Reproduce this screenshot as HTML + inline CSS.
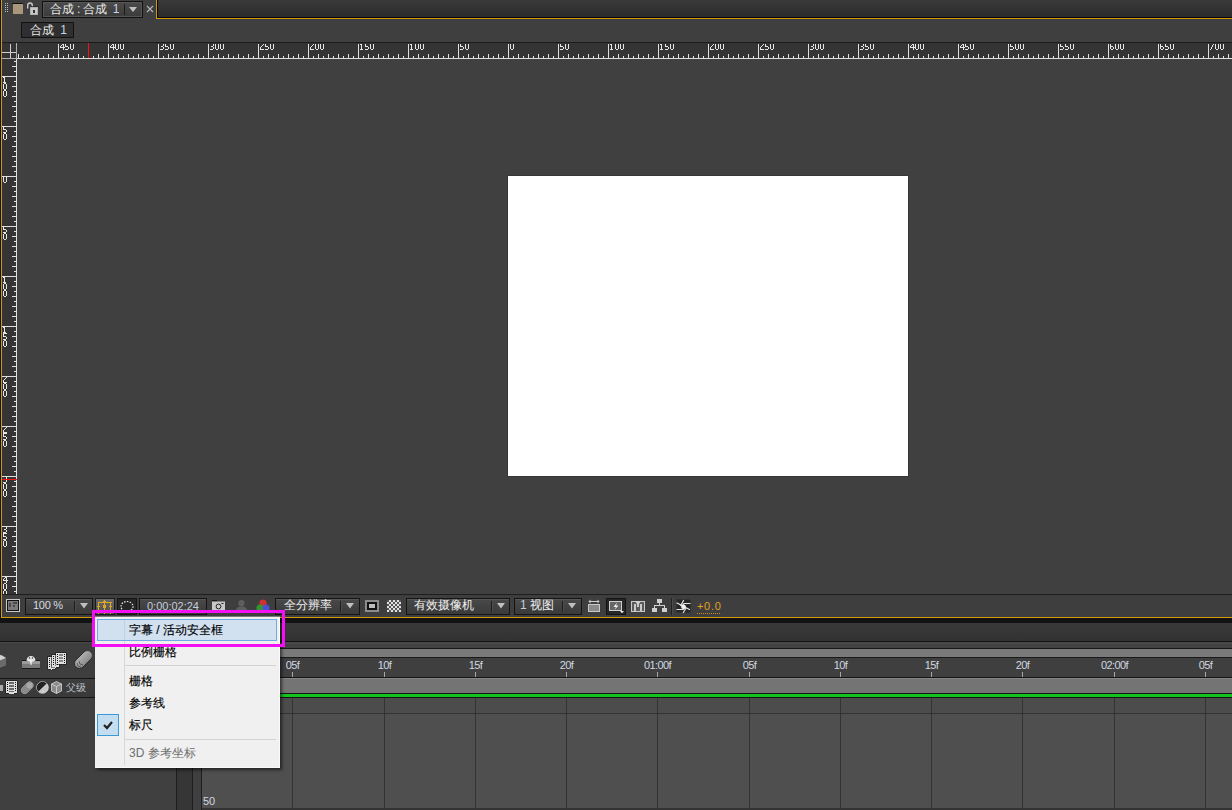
<!DOCTYPE html>
<html><head><meta charset="utf-8">
<style>
*{margin:0;padding:0;box-sizing:border-box}
html,body{width:1232px;height:810px;overflow:hidden;background:#3c3c3c;font-family:"Liberation Sans",sans-serif;position:relative}
.a{position:absolute}
.t{position:absolute;white-space:nowrap;color:#d8d8d8;font-size:12px;line-height:14px}
</style></head><body>
<div class="a" style="left:0px;top:0px;width:1232px;height:810px;background:#3f3f3f"></div>
<div class="a" style="left:0px;top:0px;width:1px;height:618px;background:#10101a"></div>
<div class="a" style="left:1px;top:0px;width:1px;height:618px;background:#d49a02"></div>
<div class="a" style="left:156px;top:0px;width:1076px;height:19px;background:#d49a02"></div>
<div class="a" style="left:157px;top:0px;width:1075px;height:18px;background:#080810"></div>
<div class="a" style="left:158px;top:0px;width:1074px;height:17px;background:linear-gradient(#3a3a3a,#2b2b2b)"></div>
<div class="a" style="left:5px;top:3px;width:1px;height:1px;background:#bdbdbd"></div>
<div class="a" style="left:7px;top:3px;width:1px;height:1px;background:#bdbdbd"></div>
<div class="a" style="left:5px;top:5px;width:1px;height:1px;background:#bdbdbd"></div>
<div class="a" style="left:7px;top:5px;width:1px;height:1px;background:#bdbdbd"></div>
<div class="a" style="left:5px;top:7px;width:1px;height:1px;background:#bdbdbd"></div>
<div class="a" style="left:7px;top:7px;width:1px;height:1px;background:#bdbdbd"></div>
<div class="a" style="left:5px;top:9px;width:1px;height:1px;background:#bdbdbd"></div>
<div class="a" style="left:7px;top:9px;width:1px;height:1px;background:#bdbdbd"></div>
<div class="a" style="left:5px;top:11px;width:1px;height:1px;background:#bdbdbd"></div>
<div class="a" style="left:7px;top:11px;width:1px;height:1px;background:#bdbdbd"></div>
<div class="a" style="left:12px;top:3px;width:11px;height:1px;background:#111"></div>
<div class="a" style="left:13px;top:4px;width:10px;height:10px;background:#a8977a"></div>
<svg class="a" style="left:26px;top:2px" width="14" height="14" viewBox="0 0 14 14"><path d="M1.7 6.5 V3.3 a2.3 2.3 0 0 1 4.6 0 V4.5" fill="none" stroke="#c8c8c8" stroke-width="1.4"/><rect x="3.5" y="4.5" width="9" height="1" fill="#1a1a1a"/><rect x="4" y="5" width="8" height="8" fill="#c8c8c8"/><rect x="4.5" y="5.5" width="7" height="7" fill="none" stroke="#b0b0b0"/><rect x="7" y="8" width="2" height="3" fill="#333"/></svg>
<div class="a" style="left:42px;top:1px;width:101px;height:17px;background:#111"></div>
<div class="a" style="left:43px;top:2px;width:99px;height:15px;background:linear-gradient(#4a4a4a,#3c3c3c);border:1px solid #555"></div>
<div class="a" style="left:124px;top:4px;width:1px;height:11px;background:#1a1a1a"></div>
<svg class="a" style="left:129px;top:6px" width="9" height="7"><path d="M0 1 H8 L4 6 Z" fill="#c0c0c0"/></svg>
<div class="t" style="left:50px;top:2px;color:#e8e8e8;font-size:12px;line-height:15px">合成<span style="margin:0 3px">:</span>合成 <span style="color:#c9d4e6;margin-left:2px">1</span></div>
<svg class="a" style="left:146px;top:5px" width="8" height="8"><path d="M1 1 L7 7 M7 1 L1 7" stroke="#b8b8b8" stroke-width="1.1"/></svg>
<div class="a" style="left:21px;top:22px;width:53px;height:16px;background:#121212"></div>
<div class="a" style="left:22px;top:23px;width:51px;height:14px;background:#2f2f2f"></div>
<div class="t" style="left:30px;top:23px;color:#e8e8e8;font-size:12px;line-height:15px">合成 <span style="color:#c9d4e6;margin-left:3px">1</span></div>
<div class="a" style="left:17px;top:59px;width:1215px;height:535px;background:#404040"></div>
<div class="a" style="left:507px;top:175px;width:402px;height:302px;background:#363636"></div>
<div class="a" style="left:508px;top:176px;width:400px;height:300px;background:#fff"></div>
<div class="a" style="left:2px;top:42px;width:1230px;height:1px;background:#1c1c1c"></div>
<div class="a" style="left:2px;top:43px;width:1230px;height:15px;background:#343434"></div>
<div class="a" style="left:2px;top:58px;width:1230px;height:1px;background:#e0e0e0"></div>
<svg class="a" style="left:0;top:43px" width="1232" height="16"><rect x="18" y="11" width="1" height="4" fill="#e0e0e0"/><rect x="23" y="13" width="1" height="2" fill="#e0e0e0"/><rect x="28" y="11" width="1" height="4" fill="#e0e0e0"/><rect x="33" y="13" width="1" height="2" fill="#e0e0e0"/><rect x="38" y="11" width="1" height="4" fill="#e0e0e0"/><rect x="43" y="13" width="1" height="2" fill="#e0e0e0"/><rect x="48" y="11" width="1" height="4" fill="#e0e0e0"/><rect x="53" y="13" width="1" height="2" fill="#e0e0e0"/><rect x="58" y="1" width="1" height="15" fill="#e0e0e0"/><rect x="63" y="13" width="1" height="2" fill="#e0e0e0"/><rect x="68" y="11" width="1" height="4" fill="#e0e0e0"/><rect x="73" y="13" width="1" height="2" fill="#e0e0e0"/><rect x="78" y="11" width="1" height="4" fill="#e0e0e0"/><rect x="83" y="13" width="1" height="2" fill="#e0e0e0"/><rect x="88" y="11" width="1" height="4" fill="#e0e0e0"/><rect x="93" y="13" width="1" height="2" fill="#e0e0e0"/><rect x="98" y="11" width="1" height="4" fill="#e0e0e0"/><rect x="103" y="13" width="1" height="2" fill="#e0e0e0"/><rect x="108" y="1" width="1" height="15" fill="#e0e0e0"/><rect x="113" y="13" width="1" height="2" fill="#e0e0e0"/><rect x="118" y="11" width="1" height="4" fill="#e0e0e0"/><rect x="123" y="13" width="1" height="2" fill="#e0e0e0"/><rect x="128" y="11" width="1" height="4" fill="#e0e0e0"/><rect x="133" y="13" width="1" height="2" fill="#e0e0e0"/><rect x="138" y="11" width="1" height="4" fill="#e0e0e0"/><rect x="143" y="13" width="1" height="2" fill="#e0e0e0"/><rect x="148" y="11" width="1" height="4" fill="#e0e0e0"/><rect x="153" y="13" width="1" height="2" fill="#e0e0e0"/><rect x="158" y="1" width="1" height="15" fill="#e0e0e0"/><rect x="163" y="13" width="1" height="2" fill="#e0e0e0"/><rect x="168" y="11" width="1" height="4" fill="#e0e0e0"/><rect x="173" y="13" width="1" height="2" fill="#e0e0e0"/><rect x="178" y="11" width="1" height="4" fill="#e0e0e0"/><rect x="183" y="13" width="1" height="2" fill="#e0e0e0"/><rect x="188" y="11" width="1" height="4" fill="#e0e0e0"/><rect x="193" y="13" width="1" height="2" fill="#e0e0e0"/><rect x="198" y="11" width="1" height="4" fill="#e0e0e0"/><rect x="203" y="13" width="1" height="2" fill="#e0e0e0"/><rect x="208" y="1" width="1" height="15" fill="#e0e0e0"/><rect x="213" y="13" width="1" height="2" fill="#e0e0e0"/><rect x="218" y="11" width="1" height="4" fill="#e0e0e0"/><rect x="223" y="13" width="1" height="2" fill="#e0e0e0"/><rect x="228" y="11" width="1" height="4" fill="#e0e0e0"/><rect x="233" y="13" width="1" height="2" fill="#e0e0e0"/><rect x="238" y="11" width="1" height="4" fill="#e0e0e0"/><rect x="243" y="13" width="1" height="2" fill="#e0e0e0"/><rect x="248" y="11" width="1" height="4" fill="#e0e0e0"/><rect x="253" y="13" width="1" height="2" fill="#e0e0e0"/><rect x="258" y="1" width="1" height="15" fill="#e0e0e0"/><rect x="263" y="13" width="1" height="2" fill="#e0e0e0"/><rect x="268" y="11" width="1" height="4" fill="#e0e0e0"/><rect x="273" y="13" width="1" height="2" fill="#e0e0e0"/><rect x="278" y="11" width="1" height="4" fill="#e0e0e0"/><rect x="283" y="13" width="1" height="2" fill="#e0e0e0"/><rect x="288" y="11" width="1" height="4" fill="#e0e0e0"/><rect x="293" y="13" width="1" height="2" fill="#e0e0e0"/><rect x="298" y="11" width="1" height="4" fill="#e0e0e0"/><rect x="303" y="13" width="1" height="2" fill="#e0e0e0"/><rect x="308" y="1" width="1" height="15" fill="#e0e0e0"/><rect x="313" y="13" width="1" height="2" fill="#e0e0e0"/><rect x="318" y="11" width="1" height="4" fill="#e0e0e0"/><rect x="323" y="13" width="1" height="2" fill="#e0e0e0"/><rect x="328" y="11" width="1" height="4" fill="#e0e0e0"/><rect x="333" y="13" width="1" height="2" fill="#e0e0e0"/><rect x="338" y="11" width="1" height="4" fill="#e0e0e0"/><rect x="343" y="13" width="1" height="2" fill="#e0e0e0"/><rect x="348" y="11" width="1" height="4" fill="#e0e0e0"/><rect x="353" y="13" width="1" height="2" fill="#e0e0e0"/><rect x="358" y="1" width="1" height="15" fill="#e0e0e0"/><rect x="363" y="13" width="1" height="2" fill="#e0e0e0"/><rect x="368" y="11" width="1" height="4" fill="#e0e0e0"/><rect x="373" y="13" width="1" height="2" fill="#e0e0e0"/><rect x="378" y="11" width="1" height="4" fill="#e0e0e0"/><rect x="383" y="13" width="1" height="2" fill="#e0e0e0"/><rect x="388" y="11" width="1" height="4" fill="#e0e0e0"/><rect x="393" y="13" width="1" height="2" fill="#e0e0e0"/><rect x="398" y="11" width="1" height="4" fill="#e0e0e0"/><rect x="403" y="13" width="1" height="2" fill="#e0e0e0"/><rect x="408" y="1" width="1" height="15" fill="#e0e0e0"/><rect x="413" y="13" width="1" height="2" fill="#e0e0e0"/><rect x="418" y="11" width="1" height="4" fill="#e0e0e0"/><rect x="423" y="13" width="1" height="2" fill="#e0e0e0"/><rect x="428" y="11" width="1" height="4" fill="#e0e0e0"/><rect x="433" y="13" width="1" height="2" fill="#e0e0e0"/><rect x="438" y="11" width="1" height="4" fill="#e0e0e0"/><rect x="443" y="13" width="1" height="2" fill="#e0e0e0"/><rect x="448" y="11" width="1" height="4" fill="#e0e0e0"/><rect x="453" y="13" width="1" height="2" fill="#e0e0e0"/><rect x="458" y="1" width="1" height="15" fill="#e0e0e0"/><rect x="463" y="13" width="1" height="2" fill="#e0e0e0"/><rect x="468" y="11" width="1" height="4" fill="#e0e0e0"/><rect x="473" y="13" width="1" height="2" fill="#e0e0e0"/><rect x="478" y="11" width="1" height="4" fill="#e0e0e0"/><rect x="483" y="13" width="1" height="2" fill="#e0e0e0"/><rect x="488" y="11" width="1" height="4" fill="#e0e0e0"/><rect x="493" y="13" width="1" height="2" fill="#e0e0e0"/><rect x="498" y="11" width="1" height="4" fill="#e0e0e0"/><rect x="503" y="13" width="1" height="2" fill="#e0e0e0"/><rect x="508" y="1" width="1" height="15" fill="#e0e0e0"/><rect x="513" y="13" width="1" height="2" fill="#e0e0e0"/><rect x="518" y="11" width="1" height="4" fill="#e0e0e0"/><rect x="523" y="13" width="1" height="2" fill="#e0e0e0"/><rect x="528" y="11" width="1" height="4" fill="#e0e0e0"/><rect x="533" y="13" width="1" height="2" fill="#e0e0e0"/><rect x="538" y="11" width="1" height="4" fill="#e0e0e0"/><rect x="543" y="13" width="1" height="2" fill="#e0e0e0"/><rect x="548" y="11" width="1" height="4" fill="#e0e0e0"/><rect x="553" y="13" width="1" height="2" fill="#e0e0e0"/><rect x="558" y="1" width="1" height="15" fill="#e0e0e0"/><rect x="563" y="13" width="1" height="2" fill="#e0e0e0"/><rect x="568" y="11" width="1" height="4" fill="#e0e0e0"/><rect x="573" y="13" width="1" height="2" fill="#e0e0e0"/><rect x="578" y="11" width="1" height="4" fill="#e0e0e0"/><rect x="583" y="13" width="1" height="2" fill="#e0e0e0"/><rect x="588" y="11" width="1" height="4" fill="#e0e0e0"/><rect x="593" y="13" width="1" height="2" fill="#e0e0e0"/><rect x="598" y="11" width="1" height="4" fill="#e0e0e0"/><rect x="603" y="13" width="1" height="2" fill="#e0e0e0"/><rect x="608" y="1" width="1" height="15" fill="#e0e0e0"/><rect x="613" y="13" width="1" height="2" fill="#e0e0e0"/><rect x="618" y="11" width="1" height="4" fill="#e0e0e0"/><rect x="623" y="13" width="1" height="2" fill="#e0e0e0"/><rect x="628" y="11" width="1" height="4" fill="#e0e0e0"/><rect x="633" y="13" width="1" height="2" fill="#e0e0e0"/><rect x="638" y="11" width="1" height="4" fill="#e0e0e0"/><rect x="643" y="13" width="1" height="2" fill="#e0e0e0"/><rect x="648" y="11" width="1" height="4" fill="#e0e0e0"/><rect x="653" y="13" width="1" height="2" fill="#e0e0e0"/><rect x="658" y="1" width="1" height="15" fill="#e0e0e0"/><rect x="663" y="13" width="1" height="2" fill="#e0e0e0"/><rect x="668" y="11" width="1" height="4" fill="#e0e0e0"/><rect x="673" y="13" width="1" height="2" fill="#e0e0e0"/><rect x="678" y="11" width="1" height="4" fill="#e0e0e0"/><rect x="683" y="13" width="1" height="2" fill="#e0e0e0"/><rect x="688" y="11" width="1" height="4" fill="#e0e0e0"/><rect x="693" y="13" width="1" height="2" fill="#e0e0e0"/><rect x="698" y="11" width="1" height="4" fill="#e0e0e0"/><rect x="703" y="13" width="1" height="2" fill="#e0e0e0"/><rect x="708" y="1" width="1" height="15" fill="#e0e0e0"/><rect x="713" y="13" width="1" height="2" fill="#e0e0e0"/><rect x="718" y="11" width="1" height="4" fill="#e0e0e0"/><rect x="723" y="13" width="1" height="2" fill="#e0e0e0"/><rect x="728" y="11" width="1" height="4" fill="#e0e0e0"/><rect x="733" y="13" width="1" height="2" fill="#e0e0e0"/><rect x="738" y="11" width="1" height="4" fill="#e0e0e0"/><rect x="743" y="13" width="1" height="2" fill="#e0e0e0"/><rect x="748" y="11" width="1" height="4" fill="#e0e0e0"/><rect x="753" y="13" width="1" height="2" fill="#e0e0e0"/><rect x="758" y="1" width="1" height="15" fill="#e0e0e0"/><rect x="763" y="13" width="1" height="2" fill="#e0e0e0"/><rect x="768" y="11" width="1" height="4" fill="#e0e0e0"/><rect x="773" y="13" width="1" height="2" fill="#e0e0e0"/><rect x="778" y="11" width="1" height="4" fill="#e0e0e0"/><rect x="783" y="13" width="1" height="2" fill="#e0e0e0"/><rect x="788" y="11" width="1" height="4" fill="#e0e0e0"/><rect x="793" y="13" width="1" height="2" fill="#e0e0e0"/><rect x="798" y="11" width="1" height="4" fill="#e0e0e0"/><rect x="803" y="13" width="1" height="2" fill="#e0e0e0"/><rect x="808" y="1" width="1" height="15" fill="#e0e0e0"/><rect x="813" y="13" width="1" height="2" fill="#e0e0e0"/><rect x="818" y="11" width="1" height="4" fill="#e0e0e0"/><rect x="823" y="13" width="1" height="2" fill="#e0e0e0"/><rect x="828" y="11" width="1" height="4" fill="#e0e0e0"/><rect x="833" y="13" width="1" height="2" fill="#e0e0e0"/><rect x="838" y="11" width="1" height="4" fill="#e0e0e0"/><rect x="843" y="13" width="1" height="2" fill="#e0e0e0"/><rect x="848" y="11" width="1" height="4" fill="#e0e0e0"/><rect x="853" y="13" width="1" height="2" fill="#e0e0e0"/><rect x="858" y="1" width="1" height="15" fill="#e0e0e0"/><rect x="863" y="13" width="1" height="2" fill="#e0e0e0"/><rect x="868" y="11" width="1" height="4" fill="#e0e0e0"/><rect x="873" y="13" width="1" height="2" fill="#e0e0e0"/><rect x="878" y="11" width="1" height="4" fill="#e0e0e0"/><rect x="883" y="13" width="1" height="2" fill="#e0e0e0"/><rect x="888" y="11" width="1" height="4" fill="#e0e0e0"/><rect x="893" y="13" width="1" height="2" fill="#e0e0e0"/><rect x="898" y="11" width="1" height="4" fill="#e0e0e0"/><rect x="903" y="13" width="1" height="2" fill="#e0e0e0"/><rect x="908" y="1" width="1" height="15" fill="#e0e0e0"/><rect x="913" y="13" width="1" height="2" fill="#e0e0e0"/><rect x="918" y="11" width="1" height="4" fill="#e0e0e0"/><rect x="923" y="13" width="1" height="2" fill="#e0e0e0"/><rect x="928" y="11" width="1" height="4" fill="#e0e0e0"/><rect x="933" y="13" width="1" height="2" fill="#e0e0e0"/><rect x="938" y="11" width="1" height="4" fill="#e0e0e0"/><rect x="943" y="13" width="1" height="2" fill="#e0e0e0"/><rect x="948" y="11" width="1" height="4" fill="#e0e0e0"/><rect x="953" y="13" width="1" height="2" fill="#e0e0e0"/><rect x="958" y="1" width="1" height="15" fill="#e0e0e0"/><rect x="963" y="13" width="1" height="2" fill="#e0e0e0"/><rect x="968" y="11" width="1" height="4" fill="#e0e0e0"/><rect x="973" y="13" width="1" height="2" fill="#e0e0e0"/><rect x="978" y="11" width="1" height="4" fill="#e0e0e0"/><rect x="983" y="13" width="1" height="2" fill="#e0e0e0"/><rect x="988" y="11" width="1" height="4" fill="#e0e0e0"/><rect x="993" y="13" width="1" height="2" fill="#e0e0e0"/><rect x="998" y="11" width="1" height="4" fill="#e0e0e0"/><rect x="1003" y="13" width="1" height="2" fill="#e0e0e0"/><rect x="1008" y="1" width="1" height="15" fill="#e0e0e0"/><rect x="1013" y="13" width="1" height="2" fill="#e0e0e0"/><rect x="1018" y="11" width="1" height="4" fill="#e0e0e0"/><rect x="1023" y="13" width="1" height="2" fill="#e0e0e0"/><rect x="1028" y="11" width="1" height="4" fill="#e0e0e0"/><rect x="1033" y="13" width="1" height="2" fill="#e0e0e0"/><rect x="1038" y="11" width="1" height="4" fill="#e0e0e0"/><rect x="1043" y="13" width="1" height="2" fill="#e0e0e0"/><rect x="1048" y="11" width="1" height="4" fill="#e0e0e0"/><rect x="1053" y="13" width="1" height="2" fill="#e0e0e0"/><rect x="1058" y="1" width="1" height="15" fill="#e0e0e0"/><rect x="1063" y="13" width="1" height="2" fill="#e0e0e0"/><rect x="1068" y="11" width="1" height="4" fill="#e0e0e0"/><rect x="1073" y="13" width="1" height="2" fill="#e0e0e0"/><rect x="1078" y="11" width="1" height="4" fill="#e0e0e0"/><rect x="1083" y="13" width="1" height="2" fill="#e0e0e0"/><rect x="1088" y="11" width="1" height="4" fill="#e0e0e0"/><rect x="1093" y="13" width="1" height="2" fill="#e0e0e0"/><rect x="1098" y="11" width="1" height="4" fill="#e0e0e0"/><rect x="1103" y="13" width="1" height="2" fill="#e0e0e0"/><rect x="1108" y="1" width="1" height="15" fill="#e0e0e0"/><rect x="1113" y="13" width="1" height="2" fill="#e0e0e0"/><rect x="1118" y="11" width="1" height="4" fill="#e0e0e0"/><rect x="1123" y="13" width="1" height="2" fill="#e0e0e0"/><rect x="1128" y="11" width="1" height="4" fill="#e0e0e0"/><rect x="1133" y="13" width="1" height="2" fill="#e0e0e0"/><rect x="1138" y="11" width="1" height="4" fill="#e0e0e0"/><rect x="1143" y="13" width="1" height="2" fill="#e0e0e0"/><rect x="1148" y="11" width="1" height="4" fill="#e0e0e0"/><rect x="1153" y="13" width="1" height="2" fill="#e0e0e0"/><rect x="1158" y="1" width="1" height="15" fill="#e0e0e0"/><rect x="1163" y="13" width="1" height="2" fill="#e0e0e0"/><rect x="1168" y="11" width="1" height="4" fill="#e0e0e0"/><rect x="1173" y="13" width="1" height="2" fill="#e0e0e0"/><rect x="1178" y="11" width="1" height="4" fill="#e0e0e0"/><rect x="1183" y="13" width="1" height="2" fill="#e0e0e0"/><rect x="1188" y="11" width="1" height="4" fill="#e0e0e0"/><rect x="1193" y="13" width="1" height="2" fill="#e0e0e0"/><rect x="1198" y="11" width="1" height="4" fill="#e0e0e0"/><rect x="1203" y="13" width="1" height="2" fill="#e0e0e0"/><rect x="1208" y="1" width="1" height="15" fill="#e0e0e0"/><rect x="1213" y="13" width="1" height="2" fill="#e0e0e0"/><rect x="1218" y="11" width="1" height="4" fill="#e0e0e0"/><rect x="1223" y="13" width="1" height="2" fill="#e0e0e0"/><rect x="1228" y="11" width="1" height="4" fill="#e0e0e0"/></svg>
<svg class="a" style="left:0;top:0" width="1232" height="60"><g fill="#e6e6e6"><rect x="62" y="44" width="1" height="1"/><rect x="63" y="44" width="1" height="1"/><rect x="61" y="45" width="1" height="1"/><rect x="63" y="45" width="1" height="1"/><rect x="60" y="46" width="1" height="1"/><rect x="63" y="46" width="1" height="1"/><rect x="60" y="47" width="1" height="1"/><rect x="61" y="47" width="1" height="1"/><rect x="62" y="47" width="1" height="1"/><rect x="63" y="47" width="1" height="1"/><rect x="64" y="47" width="1" height="1"/><rect x="63" y="48" width="1" height="1"/><rect x="63" y="49" width="1" height="1"/><rect x="65" y="44" width="1" height="1"/><rect x="65" y="45" width="1" height="1"/><rect x="65" y="46" width="1" height="1"/><rect x="66" y="46" width="1" height="1"/><rect x="67" y="46" width="1" height="1"/><rect x="68" y="47" width="1" height="1"/><rect x="68" y="48" width="1" height="1"/><rect x="65" y="49" width="1" height="1"/><rect x="66" y="49" width="1" height="1"/><rect x="67" y="49" width="1" height="1"/><rect x="70" y="44" width="1" height="1"/><rect x="73" y="44" width="1" height="1"/><rect x="70" y="45" width="1" height="1"/><rect x="73" y="45" width="1" height="1"/><rect x="70" y="46" width="1" height="1"/><rect x="73" y="46" width="1" height="1"/><rect x="70" y="47" width="1" height="1"/><rect x="73" y="47" width="1" height="1"/><rect x="70" y="48" width="1" height="1"/><rect x="73" y="48" width="1" height="1"/><rect x="71" y="49" width="1" height="1"/><rect x="72" y="49" width="1" height="1"/><rect x="112" y="44" width="1" height="1"/><rect x="113" y="44" width="1" height="1"/><rect x="111" y="45" width="1" height="1"/><rect x="113" y="45" width="1" height="1"/><rect x="110" y="46" width="1" height="1"/><rect x="113" y="46" width="1" height="1"/><rect x="110" y="47" width="1" height="1"/><rect x="111" y="47" width="1" height="1"/><rect x="112" y="47" width="1" height="1"/><rect x="113" y="47" width="1" height="1"/><rect x="114" y="47" width="1" height="1"/><rect x="113" y="48" width="1" height="1"/><rect x="113" y="49" width="1" height="1"/><rect x="115" y="44" width="1" height="1"/><rect x="118" y="44" width="1" height="1"/><rect x="115" y="45" width="1" height="1"/><rect x="118" y="45" width="1" height="1"/><rect x="115" y="46" width="1" height="1"/><rect x="118" y="46" width="1" height="1"/><rect x="115" y="47" width="1" height="1"/><rect x="118" y="47" width="1" height="1"/><rect x="115" y="48" width="1" height="1"/><rect x="118" y="48" width="1" height="1"/><rect x="116" y="49" width="1" height="1"/><rect x="117" y="49" width="1" height="1"/><rect x="120" y="44" width="1" height="1"/><rect x="123" y="44" width="1" height="1"/><rect x="120" y="45" width="1" height="1"/><rect x="123" y="45" width="1" height="1"/><rect x="120" y="46" width="1" height="1"/><rect x="123" y="46" width="1" height="1"/><rect x="120" y="47" width="1" height="1"/><rect x="123" y="47" width="1" height="1"/><rect x="120" y="48" width="1" height="1"/><rect x="123" y="48" width="1" height="1"/><rect x="121" y="49" width="1" height="1"/><rect x="122" y="49" width="1" height="1"/><rect x="163" y="44" width="1" height="1"/><rect x="163" y="45" width="1" height="1"/><rect x="161" y="46" width="1" height="1"/><rect x="162" y="46" width="1" height="1"/><rect x="163" y="47" width="1" height="1"/><rect x="163" y="48" width="1" height="1"/><rect x="160" y="49" width="1" height="1"/><rect x="161" y="49" width="1" height="1"/><rect x="162" y="49" width="1" height="1"/><rect x="165" y="44" width="1" height="1"/><rect x="165" y="45" width="1" height="1"/><rect x="165" y="46" width="1" height="1"/><rect x="166" y="46" width="1" height="1"/><rect x="167" y="46" width="1" height="1"/><rect x="168" y="47" width="1" height="1"/><rect x="168" y="48" width="1" height="1"/><rect x="165" y="49" width="1" height="1"/><rect x="166" y="49" width="1" height="1"/><rect x="167" y="49" width="1" height="1"/><rect x="170" y="44" width="1" height="1"/><rect x="173" y="44" width="1" height="1"/><rect x="170" y="45" width="1" height="1"/><rect x="173" y="45" width="1" height="1"/><rect x="170" y="46" width="1" height="1"/><rect x="173" y="46" width="1" height="1"/><rect x="170" y="47" width="1" height="1"/><rect x="173" y="47" width="1" height="1"/><rect x="170" y="48" width="1" height="1"/><rect x="173" y="48" width="1" height="1"/><rect x="171" y="49" width="1" height="1"/><rect x="172" y="49" width="1" height="1"/><rect x="213" y="44" width="1" height="1"/><rect x="213" y="45" width="1" height="1"/><rect x="211" y="46" width="1" height="1"/><rect x="212" y="46" width="1" height="1"/><rect x="213" y="47" width="1" height="1"/><rect x="213" y="48" width="1" height="1"/><rect x="210" y="49" width="1" height="1"/><rect x="211" y="49" width="1" height="1"/><rect x="212" y="49" width="1" height="1"/><rect x="215" y="44" width="1" height="1"/><rect x="218" y="44" width="1" height="1"/><rect x="215" y="45" width="1" height="1"/><rect x="218" y="45" width="1" height="1"/><rect x="215" y="46" width="1" height="1"/><rect x="218" y="46" width="1" height="1"/><rect x="215" y="47" width="1" height="1"/><rect x="218" y="47" width="1" height="1"/><rect x="215" y="48" width="1" height="1"/><rect x="218" y="48" width="1" height="1"/><rect x="216" y="49" width="1" height="1"/><rect x="217" y="49" width="1" height="1"/><rect x="220" y="44" width="1" height="1"/><rect x="223" y="44" width="1" height="1"/><rect x="220" y="45" width="1" height="1"/><rect x="223" y="45" width="1" height="1"/><rect x="220" y="46" width="1" height="1"/><rect x="223" y="46" width="1" height="1"/><rect x="220" y="47" width="1" height="1"/><rect x="223" y="47" width="1" height="1"/><rect x="220" y="48" width="1" height="1"/><rect x="223" y="48" width="1" height="1"/><rect x="221" y="49" width="1" height="1"/><rect x="222" y="49" width="1" height="1"/><rect x="263" y="44" width="1" height="1"/><rect x="262" y="45" width="1" height="1"/><rect x="261" y="46" width="1" height="1"/><rect x="260" y="47" width="1" height="1"/><rect x="260" y="48" width="1" height="1"/><rect x="260" y="49" width="1" height="1"/><rect x="261" y="49" width="1" height="1"/><rect x="262" y="49" width="1" height="1"/><rect x="263" y="49" width="1" height="1"/><rect x="265" y="44" width="1" height="1"/><rect x="265" y="45" width="1" height="1"/><rect x="265" y="46" width="1" height="1"/><rect x="266" y="46" width="1" height="1"/><rect x="267" y="46" width="1" height="1"/><rect x="268" y="47" width="1" height="1"/><rect x="268" y="48" width="1" height="1"/><rect x="265" y="49" width="1" height="1"/><rect x="266" y="49" width="1" height="1"/><rect x="267" y="49" width="1" height="1"/><rect x="270" y="44" width="1" height="1"/><rect x="273" y="44" width="1" height="1"/><rect x="270" y="45" width="1" height="1"/><rect x="273" y="45" width="1" height="1"/><rect x="270" y="46" width="1" height="1"/><rect x="273" y="46" width="1" height="1"/><rect x="270" y="47" width="1" height="1"/><rect x="273" y="47" width="1" height="1"/><rect x="270" y="48" width="1" height="1"/><rect x="273" y="48" width="1" height="1"/><rect x="271" y="49" width="1" height="1"/><rect x="272" y="49" width="1" height="1"/><rect x="313" y="44" width="1" height="1"/><rect x="312" y="45" width="1" height="1"/><rect x="311" y="46" width="1" height="1"/><rect x="310" y="47" width="1" height="1"/><rect x="310" y="48" width="1" height="1"/><rect x="310" y="49" width="1" height="1"/><rect x="311" y="49" width="1" height="1"/><rect x="312" y="49" width="1" height="1"/><rect x="313" y="49" width="1" height="1"/><rect x="315" y="44" width="1" height="1"/><rect x="318" y="44" width="1" height="1"/><rect x="315" y="45" width="1" height="1"/><rect x="318" y="45" width="1" height="1"/><rect x="315" y="46" width="1" height="1"/><rect x="318" y="46" width="1" height="1"/><rect x="315" y="47" width="1" height="1"/><rect x="318" y="47" width="1" height="1"/><rect x="315" y="48" width="1" height="1"/><rect x="318" y="48" width="1" height="1"/><rect x="316" y="49" width="1" height="1"/><rect x="317" y="49" width="1" height="1"/><rect x="320" y="44" width="1" height="1"/><rect x="323" y="44" width="1" height="1"/><rect x="320" y="45" width="1" height="1"/><rect x="323" y="45" width="1" height="1"/><rect x="320" y="46" width="1" height="1"/><rect x="323" y="46" width="1" height="1"/><rect x="320" y="47" width="1" height="1"/><rect x="323" y="47" width="1" height="1"/><rect x="320" y="48" width="1" height="1"/><rect x="323" y="48" width="1" height="1"/><rect x="321" y="49" width="1" height="1"/><rect x="322" y="49" width="1" height="1"/><rect x="360" y="44" width="1" height="1"/><rect x="361" y="44" width="1" height="1"/><rect x="361" y="45" width="1" height="1"/><rect x="361" y="46" width="1" height="1"/><rect x="361" y="47" width="1" height="1"/><rect x="361" y="48" width="1" height="1"/><rect x="360" y="49" width="1" height="1"/><rect x="361" y="49" width="1" height="1"/><rect x="362" y="49" width="1" height="1"/><rect x="365" y="44" width="1" height="1"/><rect x="365" y="45" width="1" height="1"/><rect x="365" y="46" width="1" height="1"/><rect x="366" y="46" width="1" height="1"/><rect x="367" y="46" width="1" height="1"/><rect x="368" y="47" width="1" height="1"/><rect x="368" y="48" width="1" height="1"/><rect x="365" y="49" width="1" height="1"/><rect x="366" y="49" width="1" height="1"/><rect x="367" y="49" width="1" height="1"/><rect x="370" y="44" width="1" height="1"/><rect x="373" y="44" width="1" height="1"/><rect x="370" y="45" width="1" height="1"/><rect x="373" y="45" width="1" height="1"/><rect x="370" y="46" width="1" height="1"/><rect x="373" y="46" width="1" height="1"/><rect x="370" y="47" width="1" height="1"/><rect x="373" y="47" width="1" height="1"/><rect x="370" y="48" width="1" height="1"/><rect x="373" y="48" width="1" height="1"/><rect x="371" y="49" width="1" height="1"/><rect x="372" y="49" width="1" height="1"/><rect x="410" y="44" width="1" height="1"/><rect x="411" y="44" width="1" height="1"/><rect x="411" y="45" width="1" height="1"/><rect x="411" y="46" width="1" height="1"/><rect x="411" y="47" width="1" height="1"/><rect x="411" y="48" width="1" height="1"/><rect x="410" y="49" width="1" height="1"/><rect x="411" y="49" width="1" height="1"/><rect x="412" y="49" width="1" height="1"/><rect x="415" y="44" width="1" height="1"/><rect x="418" y="44" width="1" height="1"/><rect x="415" y="45" width="1" height="1"/><rect x="418" y="45" width="1" height="1"/><rect x="415" y="46" width="1" height="1"/><rect x="418" y="46" width="1" height="1"/><rect x="415" y="47" width="1" height="1"/><rect x="418" y="47" width="1" height="1"/><rect x="415" y="48" width="1" height="1"/><rect x="418" y="48" width="1" height="1"/><rect x="416" y="49" width="1" height="1"/><rect x="417" y="49" width="1" height="1"/><rect x="420" y="44" width="1" height="1"/><rect x="423" y="44" width="1" height="1"/><rect x="420" y="45" width="1" height="1"/><rect x="423" y="45" width="1" height="1"/><rect x="420" y="46" width="1" height="1"/><rect x="423" y="46" width="1" height="1"/><rect x="420" y="47" width="1" height="1"/><rect x="423" y="47" width="1" height="1"/><rect x="420" y="48" width="1" height="1"/><rect x="423" y="48" width="1" height="1"/><rect x="421" y="49" width="1" height="1"/><rect x="422" y="49" width="1" height="1"/><rect x="460" y="44" width="1" height="1"/><rect x="460" y="45" width="1" height="1"/><rect x="460" y="46" width="1" height="1"/><rect x="461" y="46" width="1" height="1"/><rect x="462" y="46" width="1" height="1"/><rect x="463" y="47" width="1" height="1"/><rect x="463" y="48" width="1" height="1"/><rect x="460" y="49" width="1" height="1"/><rect x="461" y="49" width="1" height="1"/><rect x="462" y="49" width="1" height="1"/><rect x="465" y="44" width="1" height="1"/><rect x="468" y="44" width="1" height="1"/><rect x="465" y="45" width="1" height="1"/><rect x="468" y="45" width="1" height="1"/><rect x="465" y="46" width="1" height="1"/><rect x="468" y="46" width="1" height="1"/><rect x="465" y="47" width="1" height="1"/><rect x="468" y="47" width="1" height="1"/><rect x="465" y="48" width="1" height="1"/><rect x="468" y="48" width="1" height="1"/><rect x="466" y="49" width="1" height="1"/><rect x="467" y="49" width="1" height="1"/><rect x="510" y="44" width="1" height="1"/><rect x="513" y="44" width="1" height="1"/><rect x="510" y="45" width="1" height="1"/><rect x="513" y="45" width="1" height="1"/><rect x="510" y="46" width="1" height="1"/><rect x="513" y="46" width="1" height="1"/><rect x="510" y="47" width="1" height="1"/><rect x="513" y="47" width="1" height="1"/><rect x="510" y="48" width="1" height="1"/><rect x="513" y="48" width="1" height="1"/><rect x="511" y="49" width="1" height="1"/><rect x="512" y="49" width="1" height="1"/><rect x="560" y="44" width="1" height="1"/><rect x="560" y="45" width="1" height="1"/><rect x="560" y="46" width="1" height="1"/><rect x="561" y="46" width="1" height="1"/><rect x="562" y="46" width="1" height="1"/><rect x="563" y="47" width="1" height="1"/><rect x="563" y="48" width="1" height="1"/><rect x="560" y="49" width="1" height="1"/><rect x="561" y="49" width="1" height="1"/><rect x="562" y="49" width="1" height="1"/><rect x="565" y="44" width="1" height="1"/><rect x="568" y="44" width="1" height="1"/><rect x="565" y="45" width="1" height="1"/><rect x="568" y="45" width="1" height="1"/><rect x="565" y="46" width="1" height="1"/><rect x="568" y="46" width="1" height="1"/><rect x="565" y="47" width="1" height="1"/><rect x="568" y="47" width="1" height="1"/><rect x="565" y="48" width="1" height="1"/><rect x="568" y="48" width="1" height="1"/><rect x="566" y="49" width="1" height="1"/><rect x="567" y="49" width="1" height="1"/><rect x="610" y="44" width="1" height="1"/><rect x="611" y="44" width="1" height="1"/><rect x="611" y="45" width="1" height="1"/><rect x="611" y="46" width="1" height="1"/><rect x="611" y="47" width="1" height="1"/><rect x="611" y="48" width="1" height="1"/><rect x="610" y="49" width="1" height="1"/><rect x="611" y="49" width="1" height="1"/><rect x="612" y="49" width="1" height="1"/><rect x="615" y="44" width="1" height="1"/><rect x="618" y="44" width="1" height="1"/><rect x="615" y="45" width="1" height="1"/><rect x="618" y="45" width="1" height="1"/><rect x="615" y="46" width="1" height="1"/><rect x="618" y="46" width="1" height="1"/><rect x="615" y="47" width="1" height="1"/><rect x="618" y="47" width="1" height="1"/><rect x="615" y="48" width="1" height="1"/><rect x="618" y="48" width="1" height="1"/><rect x="616" y="49" width="1" height="1"/><rect x="617" y="49" width="1" height="1"/><rect x="620" y="44" width="1" height="1"/><rect x="623" y="44" width="1" height="1"/><rect x="620" y="45" width="1" height="1"/><rect x="623" y="45" width="1" height="1"/><rect x="620" y="46" width="1" height="1"/><rect x="623" y="46" width="1" height="1"/><rect x="620" y="47" width="1" height="1"/><rect x="623" y="47" width="1" height="1"/><rect x="620" y="48" width="1" height="1"/><rect x="623" y="48" width="1" height="1"/><rect x="621" y="49" width="1" height="1"/><rect x="622" y="49" width="1" height="1"/><rect x="660" y="44" width="1" height="1"/><rect x="661" y="44" width="1" height="1"/><rect x="661" y="45" width="1" height="1"/><rect x="661" y="46" width="1" height="1"/><rect x="661" y="47" width="1" height="1"/><rect x="661" y="48" width="1" height="1"/><rect x="660" y="49" width="1" height="1"/><rect x="661" y="49" width="1" height="1"/><rect x="662" y="49" width="1" height="1"/><rect x="665" y="44" width="1" height="1"/><rect x="665" y="45" width="1" height="1"/><rect x="665" y="46" width="1" height="1"/><rect x="666" y="46" width="1" height="1"/><rect x="667" y="46" width="1" height="1"/><rect x="668" y="47" width="1" height="1"/><rect x="668" y="48" width="1" height="1"/><rect x="665" y="49" width="1" height="1"/><rect x="666" y="49" width="1" height="1"/><rect x="667" y="49" width="1" height="1"/><rect x="670" y="44" width="1" height="1"/><rect x="673" y="44" width="1" height="1"/><rect x="670" y="45" width="1" height="1"/><rect x="673" y="45" width="1" height="1"/><rect x="670" y="46" width="1" height="1"/><rect x="673" y="46" width="1" height="1"/><rect x="670" y="47" width="1" height="1"/><rect x="673" y="47" width="1" height="1"/><rect x="670" y="48" width="1" height="1"/><rect x="673" y="48" width="1" height="1"/><rect x="671" y="49" width="1" height="1"/><rect x="672" y="49" width="1" height="1"/><rect x="713" y="44" width="1" height="1"/><rect x="712" y="45" width="1" height="1"/><rect x="711" y="46" width="1" height="1"/><rect x="710" y="47" width="1" height="1"/><rect x="710" y="48" width="1" height="1"/><rect x="710" y="49" width="1" height="1"/><rect x="711" y="49" width="1" height="1"/><rect x="712" y="49" width="1" height="1"/><rect x="713" y="49" width="1" height="1"/><rect x="715" y="44" width="1" height="1"/><rect x="718" y="44" width="1" height="1"/><rect x="715" y="45" width="1" height="1"/><rect x="718" y="45" width="1" height="1"/><rect x="715" y="46" width="1" height="1"/><rect x="718" y="46" width="1" height="1"/><rect x="715" y="47" width="1" height="1"/><rect x="718" y="47" width="1" height="1"/><rect x="715" y="48" width="1" height="1"/><rect x="718" y="48" width="1" height="1"/><rect x="716" y="49" width="1" height="1"/><rect x="717" y="49" width="1" height="1"/><rect x="720" y="44" width="1" height="1"/><rect x="723" y="44" width="1" height="1"/><rect x="720" y="45" width="1" height="1"/><rect x="723" y="45" width="1" height="1"/><rect x="720" y="46" width="1" height="1"/><rect x="723" y="46" width="1" height="1"/><rect x="720" y="47" width="1" height="1"/><rect x="723" y="47" width="1" height="1"/><rect x="720" y="48" width="1" height="1"/><rect x="723" y="48" width="1" height="1"/><rect x="721" y="49" width="1" height="1"/><rect x="722" y="49" width="1" height="1"/><rect x="763" y="44" width="1" height="1"/><rect x="762" y="45" width="1" height="1"/><rect x="761" y="46" width="1" height="1"/><rect x="760" y="47" width="1" height="1"/><rect x="760" y="48" width="1" height="1"/><rect x="760" y="49" width="1" height="1"/><rect x="761" y="49" width="1" height="1"/><rect x="762" y="49" width="1" height="1"/><rect x="763" y="49" width="1" height="1"/><rect x="765" y="44" width="1" height="1"/><rect x="765" y="45" width="1" height="1"/><rect x="765" y="46" width="1" height="1"/><rect x="766" y="46" width="1" height="1"/><rect x="767" y="46" width="1" height="1"/><rect x="768" y="47" width="1" height="1"/><rect x="768" y="48" width="1" height="1"/><rect x="765" y="49" width="1" height="1"/><rect x="766" y="49" width="1" height="1"/><rect x="767" y="49" width="1" height="1"/><rect x="770" y="44" width="1" height="1"/><rect x="773" y="44" width="1" height="1"/><rect x="770" y="45" width="1" height="1"/><rect x="773" y="45" width="1" height="1"/><rect x="770" y="46" width="1" height="1"/><rect x="773" y="46" width="1" height="1"/><rect x="770" y="47" width="1" height="1"/><rect x="773" y="47" width="1" height="1"/><rect x="770" y="48" width="1" height="1"/><rect x="773" y="48" width="1" height="1"/><rect x="771" y="49" width="1" height="1"/><rect x="772" y="49" width="1" height="1"/><rect x="813" y="44" width="1" height="1"/><rect x="813" y="45" width="1" height="1"/><rect x="811" y="46" width="1" height="1"/><rect x="812" y="46" width="1" height="1"/><rect x="813" y="47" width="1" height="1"/><rect x="813" y="48" width="1" height="1"/><rect x="810" y="49" width="1" height="1"/><rect x="811" y="49" width="1" height="1"/><rect x="812" y="49" width="1" height="1"/><rect x="815" y="44" width="1" height="1"/><rect x="818" y="44" width="1" height="1"/><rect x="815" y="45" width="1" height="1"/><rect x="818" y="45" width="1" height="1"/><rect x="815" y="46" width="1" height="1"/><rect x="818" y="46" width="1" height="1"/><rect x="815" y="47" width="1" height="1"/><rect x="818" y="47" width="1" height="1"/><rect x="815" y="48" width="1" height="1"/><rect x="818" y="48" width="1" height="1"/><rect x="816" y="49" width="1" height="1"/><rect x="817" y="49" width="1" height="1"/><rect x="820" y="44" width="1" height="1"/><rect x="823" y="44" width="1" height="1"/><rect x="820" y="45" width="1" height="1"/><rect x="823" y="45" width="1" height="1"/><rect x="820" y="46" width="1" height="1"/><rect x="823" y="46" width="1" height="1"/><rect x="820" y="47" width="1" height="1"/><rect x="823" y="47" width="1" height="1"/><rect x="820" y="48" width="1" height="1"/><rect x="823" y="48" width="1" height="1"/><rect x="821" y="49" width="1" height="1"/><rect x="822" y="49" width="1" height="1"/><rect x="863" y="44" width="1" height="1"/><rect x="863" y="45" width="1" height="1"/><rect x="861" y="46" width="1" height="1"/><rect x="862" y="46" width="1" height="1"/><rect x="863" y="47" width="1" height="1"/><rect x="863" y="48" width="1" height="1"/><rect x="860" y="49" width="1" height="1"/><rect x="861" y="49" width="1" height="1"/><rect x="862" y="49" width="1" height="1"/><rect x="865" y="44" width="1" height="1"/><rect x="865" y="45" width="1" height="1"/><rect x="865" y="46" width="1" height="1"/><rect x="866" y="46" width="1" height="1"/><rect x="867" y="46" width="1" height="1"/><rect x="868" y="47" width="1" height="1"/><rect x="868" y="48" width="1" height="1"/><rect x="865" y="49" width="1" height="1"/><rect x="866" y="49" width="1" height="1"/><rect x="867" y="49" width="1" height="1"/><rect x="870" y="44" width="1" height="1"/><rect x="873" y="44" width="1" height="1"/><rect x="870" y="45" width="1" height="1"/><rect x="873" y="45" width="1" height="1"/><rect x="870" y="46" width="1" height="1"/><rect x="873" y="46" width="1" height="1"/><rect x="870" y="47" width="1" height="1"/><rect x="873" y="47" width="1" height="1"/><rect x="870" y="48" width="1" height="1"/><rect x="873" y="48" width="1" height="1"/><rect x="871" y="49" width="1" height="1"/><rect x="872" y="49" width="1" height="1"/><rect x="912" y="44" width="1" height="1"/><rect x="913" y="44" width="1" height="1"/><rect x="911" y="45" width="1" height="1"/><rect x="913" y="45" width="1" height="1"/><rect x="910" y="46" width="1" height="1"/><rect x="913" y="46" width="1" height="1"/><rect x="910" y="47" width="1" height="1"/><rect x="911" y="47" width="1" height="1"/><rect x="912" y="47" width="1" height="1"/><rect x="913" y="47" width="1" height="1"/><rect x="914" y="47" width="1" height="1"/><rect x="913" y="48" width="1" height="1"/><rect x="913" y="49" width="1" height="1"/><rect x="915" y="44" width="1" height="1"/><rect x="918" y="44" width="1" height="1"/><rect x="915" y="45" width="1" height="1"/><rect x="918" y="45" width="1" height="1"/><rect x="915" y="46" width="1" height="1"/><rect x="918" y="46" width="1" height="1"/><rect x="915" y="47" width="1" height="1"/><rect x="918" y="47" width="1" height="1"/><rect x="915" y="48" width="1" height="1"/><rect x="918" y="48" width="1" height="1"/><rect x="916" y="49" width="1" height="1"/><rect x="917" y="49" width="1" height="1"/><rect x="920" y="44" width="1" height="1"/><rect x="923" y="44" width="1" height="1"/><rect x="920" y="45" width="1" height="1"/><rect x="923" y="45" width="1" height="1"/><rect x="920" y="46" width="1" height="1"/><rect x="923" y="46" width="1" height="1"/><rect x="920" y="47" width="1" height="1"/><rect x="923" y="47" width="1" height="1"/><rect x="920" y="48" width="1" height="1"/><rect x="923" y="48" width="1" height="1"/><rect x="921" y="49" width="1" height="1"/><rect x="922" y="49" width="1" height="1"/><rect x="962" y="44" width="1" height="1"/><rect x="963" y="44" width="1" height="1"/><rect x="961" y="45" width="1" height="1"/><rect x="963" y="45" width="1" height="1"/><rect x="960" y="46" width="1" height="1"/><rect x="963" y="46" width="1" height="1"/><rect x="960" y="47" width="1" height="1"/><rect x="961" y="47" width="1" height="1"/><rect x="962" y="47" width="1" height="1"/><rect x="963" y="47" width="1" height="1"/><rect x="964" y="47" width="1" height="1"/><rect x="963" y="48" width="1" height="1"/><rect x="963" y="49" width="1" height="1"/><rect x="965" y="44" width="1" height="1"/><rect x="965" y="45" width="1" height="1"/><rect x="965" y="46" width="1" height="1"/><rect x="966" y="46" width="1" height="1"/><rect x="967" y="46" width="1" height="1"/><rect x="968" y="47" width="1" height="1"/><rect x="968" y="48" width="1" height="1"/><rect x="965" y="49" width="1" height="1"/><rect x="966" y="49" width="1" height="1"/><rect x="967" y="49" width="1" height="1"/><rect x="970" y="44" width="1" height="1"/><rect x="973" y="44" width="1" height="1"/><rect x="970" y="45" width="1" height="1"/><rect x="973" y="45" width="1" height="1"/><rect x="970" y="46" width="1" height="1"/><rect x="973" y="46" width="1" height="1"/><rect x="970" y="47" width="1" height="1"/><rect x="973" y="47" width="1" height="1"/><rect x="970" y="48" width="1" height="1"/><rect x="973" y="48" width="1" height="1"/><rect x="971" y="49" width="1" height="1"/><rect x="972" y="49" width="1" height="1"/><rect x="1010" y="44" width="1" height="1"/><rect x="1010" y="45" width="1" height="1"/><rect x="1010" y="46" width="1" height="1"/><rect x="1011" y="46" width="1" height="1"/><rect x="1012" y="46" width="1" height="1"/><rect x="1013" y="47" width="1" height="1"/><rect x="1013" y="48" width="1" height="1"/><rect x="1010" y="49" width="1" height="1"/><rect x="1011" y="49" width="1" height="1"/><rect x="1012" y="49" width="1" height="1"/><rect x="1015" y="44" width="1" height="1"/><rect x="1018" y="44" width="1" height="1"/><rect x="1015" y="45" width="1" height="1"/><rect x="1018" y="45" width="1" height="1"/><rect x="1015" y="46" width="1" height="1"/><rect x="1018" y="46" width="1" height="1"/><rect x="1015" y="47" width="1" height="1"/><rect x="1018" y="47" width="1" height="1"/><rect x="1015" y="48" width="1" height="1"/><rect x="1018" y="48" width="1" height="1"/><rect x="1016" y="49" width="1" height="1"/><rect x="1017" y="49" width="1" height="1"/><rect x="1020" y="44" width="1" height="1"/><rect x="1023" y="44" width="1" height="1"/><rect x="1020" y="45" width="1" height="1"/><rect x="1023" y="45" width="1" height="1"/><rect x="1020" y="46" width="1" height="1"/><rect x="1023" y="46" width="1" height="1"/><rect x="1020" y="47" width="1" height="1"/><rect x="1023" y="47" width="1" height="1"/><rect x="1020" y="48" width="1" height="1"/><rect x="1023" y="48" width="1" height="1"/><rect x="1021" y="49" width="1" height="1"/><rect x="1022" y="49" width="1" height="1"/><rect x="1060" y="44" width="1" height="1"/><rect x="1060" y="45" width="1" height="1"/><rect x="1060" y="46" width="1" height="1"/><rect x="1061" y="46" width="1" height="1"/><rect x="1062" y="46" width="1" height="1"/><rect x="1063" y="47" width="1" height="1"/><rect x="1063" y="48" width="1" height="1"/><rect x="1060" y="49" width="1" height="1"/><rect x="1061" y="49" width="1" height="1"/><rect x="1062" y="49" width="1" height="1"/><rect x="1065" y="44" width="1" height="1"/><rect x="1065" y="45" width="1" height="1"/><rect x="1065" y="46" width="1" height="1"/><rect x="1066" y="46" width="1" height="1"/><rect x="1067" y="46" width="1" height="1"/><rect x="1068" y="47" width="1" height="1"/><rect x="1068" y="48" width="1" height="1"/><rect x="1065" y="49" width="1" height="1"/><rect x="1066" y="49" width="1" height="1"/><rect x="1067" y="49" width="1" height="1"/><rect x="1070" y="44" width="1" height="1"/><rect x="1073" y="44" width="1" height="1"/><rect x="1070" y="45" width="1" height="1"/><rect x="1073" y="45" width="1" height="1"/><rect x="1070" y="46" width="1" height="1"/><rect x="1073" y="46" width="1" height="1"/><rect x="1070" y="47" width="1" height="1"/><rect x="1073" y="47" width="1" height="1"/><rect x="1070" y="48" width="1" height="1"/><rect x="1073" y="48" width="1" height="1"/><rect x="1071" y="49" width="1" height="1"/><rect x="1072" y="49" width="1" height="1"/><rect x="1110" y="44" width="1" height="1"/><rect x="1110" y="45" width="1" height="1"/><rect x="1110" y="46" width="1" height="1"/><rect x="1111" y="46" width="1" height="1"/><rect x="1112" y="46" width="1" height="1"/><rect x="1110" y="47" width="1" height="1"/><rect x="1113" y="47" width="1" height="1"/><rect x="1110" y="48" width="1" height="1"/><rect x="1113" y="48" width="1" height="1"/><rect x="1111" y="49" width="1" height="1"/><rect x="1112" y="49" width="1" height="1"/><rect x="1115" y="44" width="1" height="1"/><rect x="1118" y="44" width="1" height="1"/><rect x="1115" y="45" width="1" height="1"/><rect x="1118" y="45" width="1" height="1"/><rect x="1115" y="46" width="1" height="1"/><rect x="1118" y="46" width="1" height="1"/><rect x="1115" y="47" width="1" height="1"/><rect x="1118" y="47" width="1" height="1"/><rect x="1115" y="48" width="1" height="1"/><rect x="1118" y="48" width="1" height="1"/><rect x="1116" y="49" width="1" height="1"/><rect x="1117" y="49" width="1" height="1"/><rect x="1120" y="44" width="1" height="1"/><rect x="1123" y="44" width="1" height="1"/><rect x="1120" y="45" width="1" height="1"/><rect x="1123" y="45" width="1" height="1"/><rect x="1120" y="46" width="1" height="1"/><rect x="1123" y="46" width="1" height="1"/><rect x="1120" y="47" width="1" height="1"/><rect x="1123" y="47" width="1" height="1"/><rect x="1120" y="48" width="1" height="1"/><rect x="1123" y="48" width="1" height="1"/><rect x="1121" y="49" width="1" height="1"/><rect x="1122" y="49" width="1" height="1"/><rect x="1160" y="44" width="1" height="1"/><rect x="1160" y="45" width="1" height="1"/><rect x="1160" y="46" width="1" height="1"/><rect x="1161" y="46" width="1" height="1"/><rect x="1162" y="46" width="1" height="1"/><rect x="1160" y="47" width="1" height="1"/><rect x="1163" y="47" width="1" height="1"/><rect x="1160" y="48" width="1" height="1"/><rect x="1163" y="48" width="1" height="1"/><rect x="1161" y="49" width="1" height="1"/><rect x="1162" y="49" width="1" height="1"/><rect x="1165" y="44" width="1" height="1"/><rect x="1165" y="45" width="1" height="1"/><rect x="1165" y="46" width="1" height="1"/><rect x="1166" y="46" width="1" height="1"/><rect x="1167" y="46" width="1" height="1"/><rect x="1168" y="47" width="1" height="1"/><rect x="1168" y="48" width="1" height="1"/><rect x="1165" y="49" width="1" height="1"/><rect x="1166" y="49" width="1" height="1"/><rect x="1167" y="49" width="1" height="1"/><rect x="1170" y="44" width="1" height="1"/><rect x="1173" y="44" width="1" height="1"/><rect x="1170" y="45" width="1" height="1"/><rect x="1173" y="45" width="1" height="1"/><rect x="1170" y="46" width="1" height="1"/><rect x="1173" y="46" width="1" height="1"/><rect x="1170" y="47" width="1" height="1"/><rect x="1173" y="47" width="1" height="1"/><rect x="1170" y="48" width="1" height="1"/><rect x="1173" y="48" width="1" height="1"/><rect x="1171" y="49" width="1" height="1"/><rect x="1172" y="49" width="1" height="1"/><rect x="1213" y="44" width="1" height="1"/><rect x="1212" y="45" width="1" height="1"/><rect x="1212" y="46" width="1" height="1"/><rect x="1211" y="47" width="1" height="1"/><rect x="1211" y="48" width="1" height="1"/><rect x="1210" y="49" width="1" height="1"/><rect x="1215" y="44" width="1" height="1"/><rect x="1218" y="44" width="1" height="1"/><rect x="1215" y="45" width="1" height="1"/><rect x="1218" y="45" width="1" height="1"/><rect x="1215" y="46" width="1" height="1"/><rect x="1218" y="46" width="1" height="1"/><rect x="1215" y="47" width="1" height="1"/><rect x="1218" y="47" width="1" height="1"/><rect x="1215" y="48" width="1" height="1"/><rect x="1218" y="48" width="1" height="1"/><rect x="1216" y="49" width="1" height="1"/><rect x="1217" y="49" width="1" height="1"/><rect x="1220" y="44" width="1" height="1"/><rect x="1223" y="44" width="1" height="1"/><rect x="1220" y="45" width="1" height="1"/><rect x="1223" y="45" width="1" height="1"/><rect x="1220" y="46" width="1" height="1"/><rect x="1223" y="46" width="1" height="1"/><rect x="1220" y="47" width="1" height="1"/><rect x="1223" y="47" width="1" height="1"/><rect x="1220" y="48" width="1" height="1"/><rect x="1223" y="48" width="1" height="1"/><rect x="1221" y="49" width="1" height="1"/><rect x="1222" y="49" width="1" height="1"/></g></svg>
<div class="a" style="left:88px;top:43px;width:1px;height:15px;background:#ff1010"></div>
<div class="a" style="left:2px;top:43px;width:15px;height:16px;background:#343434"></div>
<div class="a" style="left:10px;top:44px;width:1px;height:14px;background:#cfcfcf"></div>
<div class="a" style="left:2px;top:52px;width:14px;height:1px;background:#cfcfcf"></div>
<div class="a" style="left:16px;top:43px;width:1px;height:16px;background:#b0b0b0"></div>
<div class="a" style="left:2px;top:58px;width:15px;height:1px;background:#b0b0b0"></div>
<div class="a" style="left:2px;top:59px;width:14px;height:535px;background:#343434"></div>
<div class="a" style="left:16px;top:59px;width:1px;height:535px;background:#e0e0e0"></div>
<svg class="a" style="left:2px;top:59px" width="15" height="535"><rect x="12" y="2" width="2" height="1" fill="#e0e0e0"/><rect x="10" y="7" width="4" height="1" fill="#e0e0e0"/><rect x="12" y="12" width="2" height="1" fill="#e0e0e0"/><rect x="0" y="17" width="15" height="1" fill="#e0e0e0"/><rect x="12" y="22" width="2" height="1" fill="#e0e0e0"/><rect x="10" y="27" width="4" height="1" fill="#e0e0e0"/><rect x="12" y="32" width="2" height="1" fill="#e0e0e0"/><rect x="10" y="37" width="4" height="1" fill="#e0e0e0"/><rect x="12" y="42" width="2" height="1" fill="#e0e0e0"/><rect x="10" y="47" width="4" height="1" fill="#e0e0e0"/><rect x="12" y="52" width="2" height="1" fill="#e0e0e0"/><rect x="10" y="57" width="4" height="1" fill="#e0e0e0"/><rect x="12" y="62" width="2" height="1" fill="#e0e0e0"/><rect x="0" y="67" width="15" height="1" fill="#e0e0e0"/><rect x="12" y="72" width="2" height="1" fill="#e0e0e0"/><rect x="10" y="77" width="4" height="1" fill="#e0e0e0"/><rect x="12" y="82" width="2" height="1" fill="#e0e0e0"/><rect x="10" y="87" width="4" height="1" fill="#e0e0e0"/><rect x="12" y="92" width="2" height="1" fill="#e0e0e0"/><rect x="10" y="97" width="4" height="1" fill="#e0e0e0"/><rect x="12" y="102" width="2" height="1" fill="#e0e0e0"/><rect x="10" y="107" width="4" height="1" fill="#e0e0e0"/><rect x="12" y="112" width="2" height="1" fill="#e0e0e0"/><rect x="0" y="117" width="15" height="1" fill="#e0e0e0"/><rect x="12" y="122" width="2" height="1" fill="#e0e0e0"/><rect x="10" y="127" width="4" height="1" fill="#e0e0e0"/><rect x="12" y="132" width="2" height="1" fill="#e0e0e0"/><rect x="10" y="137" width="4" height="1" fill="#e0e0e0"/><rect x="12" y="142" width="2" height="1" fill="#e0e0e0"/><rect x="10" y="147" width="4" height="1" fill="#e0e0e0"/><rect x="12" y="152" width="2" height="1" fill="#e0e0e0"/><rect x="10" y="157" width="4" height="1" fill="#e0e0e0"/><rect x="12" y="162" width="2" height="1" fill="#e0e0e0"/><rect x="0" y="167" width="15" height="1" fill="#e0e0e0"/><rect x="12" y="172" width="2" height="1" fill="#e0e0e0"/><rect x="10" y="177" width="4" height="1" fill="#e0e0e0"/><rect x="12" y="182" width="2" height="1" fill="#e0e0e0"/><rect x="10" y="187" width="4" height="1" fill="#e0e0e0"/><rect x="12" y="192" width="2" height="1" fill="#e0e0e0"/><rect x="10" y="197" width="4" height="1" fill="#e0e0e0"/><rect x="12" y="202" width="2" height="1" fill="#e0e0e0"/><rect x="10" y="207" width="4" height="1" fill="#e0e0e0"/><rect x="12" y="212" width="2" height="1" fill="#e0e0e0"/><rect x="0" y="217" width="15" height="1" fill="#e0e0e0"/><rect x="12" y="222" width="2" height="1" fill="#e0e0e0"/><rect x="10" y="227" width="4" height="1" fill="#e0e0e0"/><rect x="12" y="232" width="2" height="1" fill="#e0e0e0"/><rect x="10" y="237" width="4" height="1" fill="#e0e0e0"/><rect x="12" y="242" width="2" height="1" fill="#e0e0e0"/><rect x="10" y="247" width="4" height="1" fill="#e0e0e0"/><rect x="12" y="252" width="2" height="1" fill="#e0e0e0"/><rect x="10" y="257" width="4" height="1" fill="#e0e0e0"/><rect x="12" y="262" width="2" height="1" fill="#e0e0e0"/><rect x="0" y="267" width="15" height="1" fill="#e0e0e0"/><rect x="12" y="272" width="2" height="1" fill="#e0e0e0"/><rect x="10" y="277" width="4" height="1" fill="#e0e0e0"/><rect x="12" y="282" width="2" height="1" fill="#e0e0e0"/><rect x="10" y="287" width="4" height="1" fill="#e0e0e0"/><rect x="12" y="292" width="2" height="1" fill="#e0e0e0"/><rect x="10" y="297" width="4" height="1" fill="#e0e0e0"/><rect x="12" y="302" width="2" height="1" fill="#e0e0e0"/><rect x="10" y="307" width="4" height="1" fill="#e0e0e0"/><rect x="12" y="312" width="2" height="1" fill="#e0e0e0"/><rect x="0" y="317" width="15" height="1" fill="#e0e0e0"/><rect x="12" y="322" width="2" height="1" fill="#e0e0e0"/><rect x="10" y="327" width="4" height="1" fill="#e0e0e0"/><rect x="12" y="332" width="2" height="1" fill="#e0e0e0"/><rect x="10" y="337" width="4" height="1" fill="#e0e0e0"/><rect x="12" y="342" width="2" height="1" fill="#e0e0e0"/><rect x="10" y="347" width="4" height="1" fill="#e0e0e0"/><rect x="12" y="352" width="2" height="1" fill="#e0e0e0"/><rect x="10" y="357" width="4" height="1" fill="#e0e0e0"/><rect x="12" y="362" width="2" height="1" fill="#e0e0e0"/><rect x="0" y="367" width="15" height="1" fill="#e0e0e0"/><rect x="12" y="372" width="2" height="1" fill="#e0e0e0"/><rect x="10" y="377" width="4" height="1" fill="#e0e0e0"/><rect x="12" y="382" width="2" height="1" fill="#e0e0e0"/><rect x="10" y="387" width="4" height="1" fill="#e0e0e0"/><rect x="12" y="392" width="2" height="1" fill="#e0e0e0"/><rect x="10" y="397" width="4" height="1" fill="#e0e0e0"/><rect x="12" y="402" width="2" height="1" fill="#e0e0e0"/><rect x="10" y="407" width="4" height="1" fill="#e0e0e0"/><rect x="12" y="412" width="2" height="1" fill="#e0e0e0"/><rect x="0" y="417" width="15" height="1" fill="#e0e0e0"/><rect x="12" y="422" width="2" height="1" fill="#e0e0e0"/><rect x="10" y="427" width="4" height="1" fill="#e0e0e0"/><rect x="12" y="432" width="2" height="1" fill="#e0e0e0"/><rect x="10" y="437" width="4" height="1" fill="#e0e0e0"/><rect x="12" y="442" width="2" height="1" fill="#e0e0e0"/><rect x="10" y="447" width="4" height="1" fill="#e0e0e0"/><rect x="12" y="452" width="2" height="1" fill="#e0e0e0"/><rect x="10" y="457" width="4" height="1" fill="#e0e0e0"/><rect x="12" y="462" width="2" height="1" fill="#e0e0e0"/><rect x="0" y="467" width="15" height="1" fill="#e0e0e0"/><rect x="12" y="472" width="2" height="1" fill="#e0e0e0"/><rect x="10" y="477" width="4" height="1" fill="#e0e0e0"/><rect x="12" y="482" width="2" height="1" fill="#e0e0e0"/><rect x="10" y="487" width="4" height="1" fill="#e0e0e0"/><rect x="12" y="492" width="2" height="1" fill="#e0e0e0"/><rect x="10" y="497" width="4" height="1" fill="#e0e0e0"/><rect x="12" y="502" width="2" height="1" fill="#e0e0e0"/><rect x="10" y="507" width="4" height="1" fill="#e0e0e0"/><rect x="12" y="512" width="2" height="1" fill="#e0e0e0"/><rect x="0" y="517" width="15" height="1" fill="#e0e0e0"/><rect x="12" y="522" width="2" height="1" fill="#e0e0e0"/><rect x="10" y="527" width="4" height="1" fill="#e0e0e0"/><rect x="12" y="532" width="2" height="1" fill="#e0e0e0"/></svg>
<svg class="a" style="left:0;top:0" width="20" height="600"><g fill="#e6e6e6"><rect x="3" y="77" width="1" height="1"/><rect x="4" y="77" width="1" height="1"/><rect x="4" y="78" width="1" height="1"/><rect x="4" y="79" width="1" height="1"/><rect x="4" y="80" width="1" height="1"/><rect x="4" y="81" width="1" height="1"/><rect x="3" y="82" width="1" height="1"/><rect x="4" y="82" width="1" height="1"/><rect x="5" y="82" width="1" height="1"/><rect x="4" y="83" width="1" height="1"/><rect x="5" y="83" width="1" height="1"/><rect x="3" y="84" width="1" height="1"/><rect x="6" y="84" width="1" height="1"/><rect x="3" y="85" width="1" height="1"/><rect x="6" y="85" width="1" height="1"/><rect x="3" y="86" width="1" height="1"/><rect x="6" y="86" width="1" height="1"/><rect x="3" y="87" width="1" height="1"/><rect x="6" y="87" width="1" height="1"/><rect x="3" y="88" width="1" height="1"/><rect x="6" y="88" width="1" height="1"/><rect x="4" y="89" width="1" height="1"/><rect x="5" y="89" width="1" height="1"/><rect x="4" y="90" width="1" height="1"/><rect x="5" y="90" width="1" height="1"/><rect x="3" y="91" width="1" height="1"/><rect x="6" y="91" width="1" height="1"/><rect x="3" y="92" width="1" height="1"/><rect x="6" y="92" width="1" height="1"/><rect x="3" y="93" width="1" height="1"/><rect x="6" y="93" width="1" height="1"/><rect x="3" y="94" width="1" height="1"/><rect x="6" y="94" width="1" height="1"/><rect x="3" y="95" width="1" height="1"/><rect x="6" y="95" width="1" height="1"/><rect x="4" y="96" width="1" height="1"/><rect x="5" y="96" width="1" height="1"/><rect x="3" y="127" width="1" height="1"/><rect x="3" y="128" width="1" height="1"/><rect x="3" y="129" width="1" height="1"/><rect x="4" y="129" width="1" height="1"/><rect x="5" y="129" width="1" height="1"/><rect x="6" y="130" width="1" height="1"/><rect x="6" y="131" width="1" height="1"/><rect x="3" y="132" width="1" height="1"/><rect x="4" y="132" width="1" height="1"/><rect x="5" y="132" width="1" height="1"/><rect x="4" y="133" width="1" height="1"/><rect x="5" y="133" width="1" height="1"/><rect x="3" y="134" width="1" height="1"/><rect x="6" y="134" width="1" height="1"/><rect x="3" y="135" width="1" height="1"/><rect x="6" y="135" width="1" height="1"/><rect x="3" y="136" width="1" height="1"/><rect x="6" y="136" width="1" height="1"/><rect x="3" y="137" width="1" height="1"/><rect x="6" y="137" width="1" height="1"/><rect x="3" y="138" width="1" height="1"/><rect x="6" y="138" width="1" height="1"/><rect x="4" y="139" width="1" height="1"/><rect x="5" y="139" width="1" height="1"/><rect x="3" y="177" width="1" height="1"/><rect x="6" y="177" width="1" height="1"/><rect x="3" y="178" width="1" height="1"/><rect x="6" y="178" width="1" height="1"/><rect x="3" y="179" width="1" height="1"/><rect x="6" y="179" width="1" height="1"/><rect x="3" y="180" width="1" height="1"/><rect x="6" y="180" width="1" height="1"/><rect x="3" y="181" width="1" height="1"/><rect x="6" y="181" width="1" height="1"/><rect x="4" y="182" width="1" height="1"/><rect x="5" y="182" width="1" height="1"/><rect x="3" y="227" width="1" height="1"/><rect x="3" y="228" width="1" height="1"/><rect x="3" y="229" width="1" height="1"/><rect x="4" y="229" width="1" height="1"/><rect x="5" y="229" width="1" height="1"/><rect x="6" y="230" width="1" height="1"/><rect x="6" y="231" width="1" height="1"/><rect x="3" y="232" width="1" height="1"/><rect x="4" y="232" width="1" height="1"/><rect x="5" y="232" width="1" height="1"/><rect x="4" y="233" width="1" height="1"/><rect x="5" y="233" width="1" height="1"/><rect x="3" y="234" width="1" height="1"/><rect x="6" y="234" width="1" height="1"/><rect x="3" y="235" width="1" height="1"/><rect x="6" y="235" width="1" height="1"/><rect x="3" y="236" width="1" height="1"/><rect x="6" y="236" width="1" height="1"/><rect x="3" y="237" width="1" height="1"/><rect x="6" y="237" width="1" height="1"/><rect x="3" y="238" width="1" height="1"/><rect x="6" y="238" width="1" height="1"/><rect x="4" y="239" width="1" height="1"/><rect x="5" y="239" width="1" height="1"/><rect x="3" y="277" width="1" height="1"/><rect x="4" y="277" width="1" height="1"/><rect x="4" y="278" width="1" height="1"/><rect x="4" y="279" width="1" height="1"/><rect x="4" y="280" width="1" height="1"/><rect x="4" y="281" width="1" height="1"/><rect x="3" y="282" width="1" height="1"/><rect x="4" y="282" width="1" height="1"/><rect x="5" y="282" width="1" height="1"/><rect x="4" y="283" width="1" height="1"/><rect x="5" y="283" width="1" height="1"/><rect x="3" y="284" width="1" height="1"/><rect x="6" y="284" width="1" height="1"/><rect x="3" y="285" width="1" height="1"/><rect x="6" y="285" width="1" height="1"/><rect x="3" y="286" width="1" height="1"/><rect x="6" y="286" width="1" height="1"/><rect x="3" y="287" width="1" height="1"/><rect x="6" y="287" width="1" height="1"/><rect x="3" y="288" width="1" height="1"/><rect x="6" y="288" width="1" height="1"/><rect x="4" y="289" width="1" height="1"/><rect x="5" y="289" width="1" height="1"/><rect x="4" y="290" width="1" height="1"/><rect x="5" y="290" width="1" height="1"/><rect x="3" y="291" width="1" height="1"/><rect x="6" y="291" width="1" height="1"/><rect x="3" y="292" width="1" height="1"/><rect x="6" y="292" width="1" height="1"/><rect x="3" y="293" width="1" height="1"/><rect x="6" y="293" width="1" height="1"/><rect x="3" y="294" width="1" height="1"/><rect x="6" y="294" width="1" height="1"/><rect x="3" y="295" width="1" height="1"/><rect x="6" y="295" width="1" height="1"/><rect x="4" y="296" width="1" height="1"/><rect x="5" y="296" width="1" height="1"/><rect x="3" y="327" width="1" height="1"/><rect x="4" y="327" width="1" height="1"/><rect x="4" y="328" width="1" height="1"/><rect x="4" y="329" width="1" height="1"/><rect x="4" y="330" width="1" height="1"/><rect x="4" y="331" width="1" height="1"/><rect x="3" y="332" width="1" height="1"/><rect x="4" y="332" width="1" height="1"/><rect x="5" y="332" width="1" height="1"/><rect x="3" y="333" width="1" height="1"/><rect x="4" y="333" width="1" height="1"/><rect x="5" y="333" width="1" height="1"/><rect x="6" y="333" width="1" height="1"/><rect x="3" y="334" width="1" height="1"/><rect x="3" y="335" width="1" height="1"/><rect x="3" y="336" width="1" height="1"/><rect x="4" y="336" width="1" height="1"/><rect x="5" y="336" width="1" height="1"/><rect x="6" y="337" width="1" height="1"/><rect x="6" y="338" width="1" height="1"/><rect x="3" y="339" width="1" height="1"/><rect x="4" y="339" width="1" height="1"/><rect x="5" y="339" width="1" height="1"/><rect x="4" y="340" width="1" height="1"/><rect x="5" y="340" width="1" height="1"/><rect x="3" y="341" width="1" height="1"/><rect x="6" y="341" width="1" height="1"/><rect x="3" y="342" width="1" height="1"/><rect x="6" y="342" width="1" height="1"/><rect x="3" y="343" width="1" height="1"/><rect x="6" y="343" width="1" height="1"/><rect x="3" y="344" width="1" height="1"/><rect x="6" y="344" width="1" height="1"/><rect x="3" y="345" width="1" height="1"/><rect x="6" y="345" width="1" height="1"/><rect x="4" y="346" width="1" height="1"/><rect x="5" y="346" width="1" height="1"/><rect x="6" y="377" width="1" height="1"/><rect x="5" y="378" width="1" height="1"/><rect x="4" y="379" width="1" height="1"/><rect x="3" y="380" width="1" height="1"/><rect x="3" y="381" width="1" height="1"/><rect x="3" y="382" width="1" height="1"/><rect x="4" y="382" width="1" height="1"/><rect x="5" y="382" width="1" height="1"/><rect x="6" y="382" width="1" height="1"/><rect x="4" y="383" width="1" height="1"/><rect x="5" y="383" width="1" height="1"/><rect x="3" y="384" width="1" height="1"/><rect x="6" y="384" width="1" height="1"/><rect x="3" y="385" width="1" height="1"/><rect x="6" y="385" width="1" height="1"/><rect x="3" y="386" width="1" height="1"/><rect x="6" y="386" width="1" height="1"/><rect x="3" y="387" width="1" height="1"/><rect x="6" y="387" width="1" height="1"/><rect x="3" y="388" width="1" height="1"/><rect x="6" y="388" width="1" height="1"/><rect x="4" y="389" width="1" height="1"/><rect x="5" y="389" width="1" height="1"/><rect x="4" y="390" width="1" height="1"/><rect x="5" y="390" width="1" height="1"/><rect x="3" y="391" width="1" height="1"/><rect x="6" y="391" width="1" height="1"/><rect x="3" y="392" width="1" height="1"/><rect x="6" y="392" width="1" height="1"/><rect x="3" y="393" width="1" height="1"/><rect x="6" y="393" width="1" height="1"/><rect x="3" y="394" width="1" height="1"/><rect x="6" y="394" width="1" height="1"/><rect x="3" y="395" width="1" height="1"/><rect x="6" y="395" width="1" height="1"/><rect x="4" y="396" width="1" height="1"/><rect x="5" y="396" width="1" height="1"/><rect x="6" y="427" width="1" height="1"/><rect x="5" y="428" width="1" height="1"/><rect x="4" y="429" width="1" height="1"/><rect x="3" y="430" width="1" height="1"/><rect x="3" y="431" width="1" height="1"/><rect x="3" y="432" width="1" height="1"/><rect x="4" y="432" width="1" height="1"/><rect x="5" y="432" width="1" height="1"/><rect x="6" y="432" width="1" height="1"/><rect x="3" y="433" width="1" height="1"/><rect x="4" y="433" width="1" height="1"/><rect x="5" y="433" width="1" height="1"/><rect x="6" y="433" width="1" height="1"/><rect x="3" y="434" width="1" height="1"/><rect x="3" y="435" width="1" height="1"/><rect x="3" y="436" width="1" height="1"/><rect x="4" y="436" width="1" height="1"/><rect x="5" y="436" width="1" height="1"/><rect x="6" y="437" width="1" height="1"/><rect x="6" y="438" width="1" height="1"/><rect x="3" y="439" width="1" height="1"/><rect x="4" y="439" width="1" height="1"/><rect x="5" y="439" width="1" height="1"/><rect x="4" y="440" width="1" height="1"/><rect x="5" y="440" width="1" height="1"/><rect x="3" y="441" width="1" height="1"/><rect x="6" y="441" width="1" height="1"/><rect x="3" y="442" width="1" height="1"/><rect x="6" y="442" width="1" height="1"/><rect x="3" y="443" width="1" height="1"/><rect x="6" y="443" width="1" height="1"/><rect x="3" y="444" width="1" height="1"/><rect x="6" y="444" width="1" height="1"/><rect x="3" y="445" width="1" height="1"/><rect x="6" y="445" width="1" height="1"/><rect x="4" y="446" width="1" height="1"/><rect x="5" y="446" width="1" height="1"/><rect x="6" y="477" width="1" height="1"/><rect x="6" y="478" width="1" height="1"/><rect x="4" y="479" width="1" height="1"/><rect x="5" y="479" width="1" height="1"/><rect x="6" y="480" width="1" height="1"/><rect x="6" y="481" width="1" height="1"/><rect x="3" y="482" width="1" height="1"/><rect x="4" y="482" width="1" height="1"/><rect x="5" y="482" width="1" height="1"/><rect x="4" y="483" width="1" height="1"/><rect x="5" y="483" width="1" height="1"/><rect x="3" y="484" width="1" height="1"/><rect x="6" y="484" width="1" height="1"/><rect x="3" y="485" width="1" height="1"/><rect x="6" y="485" width="1" height="1"/><rect x="3" y="486" width="1" height="1"/><rect x="6" y="486" width="1" height="1"/><rect x="3" y="487" width="1" height="1"/><rect x="6" y="487" width="1" height="1"/><rect x="3" y="488" width="1" height="1"/><rect x="6" y="488" width="1" height="1"/><rect x="4" y="489" width="1" height="1"/><rect x="5" y="489" width="1" height="1"/><rect x="4" y="490" width="1" height="1"/><rect x="5" y="490" width="1" height="1"/><rect x="3" y="491" width="1" height="1"/><rect x="6" y="491" width="1" height="1"/><rect x="3" y="492" width="1" height="1"/><rect x="6" y="492" width="1" height="1"/><rect x="3" y="493" width="1" height="1"/><rect x="6" y="493" width="1" height="1"/><rect x="3" y="494" width="1" height="1"/><rect x="6" y="494" width="1" height="1"/><rect x="3" y="495" width="1" height="1"/><rect x="6" y="495" width="1" height="1"/><rect x="4" y="496" width="1" height="1"/><rect x="5" y="496" width="1" height="1"/><rect x="6" y="527" width="1" height="1"/><rect x="6" y="528" width="1" height="1"/><rect x="4" y="529" width="1" height="1"/><rect x="5" y="529" width="1" height="1"/><rect x="6" y="530" width="1" height="1"/><rect x="6" y="531" width="1" height="1"/><rect x="3" y="532" width="1" height="1"/><rect x="4" y="532" width="1" height="1"/><rect x="5" y="532" width="1" height="1"/><rect x="3" y="533" width="1" height="1"/><rect x="4" y="533" width="1" height="1"/><rect x="5" y="533" width="1" height="1"/><rect x="6" y="533" width="1" height="1"/><rect x="3" y="534" width="1" height="1"/><rect x="3" y="535" width="1" height="1"/><rect x="3" y="536" width="1" height="1"/><rect x="4" y="536" width="1" height="1"/><rect x="5" y="536" width="1" height="1"/><rect x="6" y="537" width="1" height="1"/><rect x="6" y="538" width="1" height="1"/><rect x="3" y="539" width="1" height="1"/><rect x="4" y="539" width="1" height="1"/><rect x="5" y="539" width="1" height="1"/><rect x="4" y="540" width="1" height="1"/><rect x="5" y="540" width="1" height="1"/><rect x="3" y="541" width="1" height="1"/><rect x="6" y="541" width="1" height="1"/><rect x="3" y="542" width="1" height="1"/><rect x="6" y="542" width="1" height="1"/><rect x="3" y="543" width="1" height="1"/><rect x="6" y="543" width="1" height="1"/><rect x="3" y="544" width="1" height="1"/><rect x="6" y="544" width="1" height="1"/><rect x="3" y="545" width="1" height="1"/><rect x="6" y="545" width="1" height="1"/><rect x="4" y="546" width="1" height="1"/><rect x="5" y="546" width="1" height="1"/><rect x="5" y="577" width="1" height="1"/><rect x="6" y="577" width="1" height="1"/><rect x="4" y="578" width="1" height="1"/><rect x="6" y="578" width="1" height="1"/><rect x="3" y="579" width="1" height="1"/><rect x="6" y="579" width="1" height="1"/><rect x="3" y="580" width="1" height="1"/><rect x="4" y="580" width="1" height="1"/><rect x="5" y="580" width="1" height="1"/><rect x="6" y="580" width="1" height="1"/><rect x="7" y="580" width="1" height="1"/><rect x="6" y="581" width="1" height="1"/><rect x="6" y="582" width="1" height="1"/><rect x="4" y="583" width="1" height="1"/><rect x="5" y="583" width="1" height="1"/><rect x="3" y="584" width="1" height="1"/><rect x="6" y="584" width="1" height="1"/><rect x="3" y="585" width="1" height="1"/><rect x="6" y="585" width="1" height="1"/><rect x="3" y="586" width="1" height="1"/><rect x="6" y="586" width="1" height="1"/><rect x="3" y="587" width="1" height="1"/><rect x="6" y="587" width="1" height="1"/><rect x="3" y="588" width="1" height="1"/><rect x="6" y="588" width="1" height="1"/><rect x="4" y="589" width="1" height="1"/><rect x="5" y="589" width="1" height="1"/><rect x="4" y="590" width="1" height="1"/><rect x="5" y="590" width="1" height="1"/><rect x="3" y="591" width="1" height="1"/><rect x="6" y="591" width="1" height="1"/><rect x="3" y="592" width="1" height="1"/><rect x="6" y="592" width="1" height="1"/><rect x="3" y="593" width="1" height="1"/><rect x="6" y="593" width="1" height="1"/><rect x="3" y="594" width="1" height="1"/><rect x="6" y="594" width="1" height="1"/><rect x="3" y="595" width="1" height="1"/><rect x="6" y="595" width="1" height="1"/><rect x="4" y="596" width="1" height="1"/><rect x="5" y="596" width="1" height="1"/><rect x="5" y="627" width="1" height="1"/><rect x="6" y="627" width="1" height="1"/><rect x="4" y="628" width="1" height="1"/><rect x="6" y="628" width="1" height="1"/><rect x="3" y="629" width="1" height="1"/><rect x="6" y="629" width="1" height="1"/><rect x="3" y="630" width="1" height="1"/><rect x="4" y="630" width="1" height="1"/><rect x="5" y="630" width="1" height="1"/><rect x="6" y="630" width="1" height="1"/><rect x="7" y="630" width="1" height="1"/><rect x="6" y="631" width="1" height="1"/><rect x="6" y="632" width="1" height="1"/><rect x="3" y="633" width="1" height="1"/><rect x="4" y="633" width="1" height="1"/><rect x="5" y="633" width="1" height="1"/><rect x="6" y="633" width="1" height="1"/><rect x="3" y="634" width="1" height="1"/><rect x="3" y="635" width="1" height="1"/><rect x="3" y="636" width="1" height="1"/><rect x="4" y="636" width="1" height="1"/><rect x="5" y="636" width="1" height="1"/><rect x="6" y="637" width="1" height="1"/><rect x="6" y="638" width="1" height="1"/><rect x="3" y="639" width="1" height="1"/><rect x="4" y="639" width="1" height="1"/><rect x="5" y="639" width="1" height="1"/><rect x="4" y="640" width="1" height="1"/><rect x="5" y="640" width="1" height="1"/><rect x="3" y="641" width="1" height="1"/><rect x="6" y="641" width="1" height="1"/><rect x="3" y="642" width="1" height="1"/><rect x="6" y="642" width="1" height="1"/><rect x="3" y="643" width="1" height="1"/><rect x="6" y="643" width="1" height="1"/><rect x="3" y="644" width="1" height="1"/><rect x="6" y="644" width="1" height="1"/><rect x="3" y="645" width="1" height="1"/><rect x="6" y="645" width="1" height="1"/><rect x="4" y="646" width="1" height="1"/><rect x="5" y="646" width="1" height="1"/></g></svg>
<div class="a" style="left:2px;top:479px;width:15px;height:1px;background:#ff1010"></div>
<div class="a" style="left:2px;top:594px;width:1230px;height:1px;background:#1e1e1e"></div>
<div class="a" style="left:2px;top:595px;width:1230px;height:22px;background:#3e3e3e"></div>
<div class="a" style="left:1px;top:617px;width:1231px;height:1px;background:#d49a02"></div>
<div class="a" style="left:0px;top:618px;width:1232px;height:5px;background:#131313"></div>
<div class="a" style="left:6px;top:599px;width:14px;height:13px;background:#c8c8c8"></div>
<div class="a" style="left:7px;top:600px;width:12px;height:11px;background:#111"></div>
<div class="a" style="left:8px;top:601px;width:10px;height:9px;background:#7a7a7a"></div>
<div class="a" style="left:9px;top:603px;width:2px;height:4px;background:#4a4a4a"></div>
<div class="a" style="left:13px;top:602px;width:4px;height:2px;background:#4a4a4a"></div>
<div class="a" style="left:13px;top:605px;width:2px;height:2px;background:#4a4a4a"></div>
<div class="a" style="left:25px;top:598px;width:68px;height:17px;background:#141414"></div>
<div class="a" style="left:26px;top:599px;width:66px;height:15px;background:linear-gradient(#484848,#3a3a3a);border-top:1px solid #555;"></div>
<div class="a" style="left:74px;top:601px;width:1px;height:11px;background:#1c1c1c"></div>
<div class="a" style="left:75px;top:601px;width:1px;height:11px;background:#4e4e4e"></div>
<svg class="a" style="left:80px;top:603px" width="9" height="6"><path d="M0 0 H8 L4 5.5 Z" fill="#c0c0c0"/></svg>
<div class="t" style="left:33px;top:598px;color:#f0f0f0;font-size:12px;line-height:15px;font-size:11px;letter-spacing:-0.3px;color:#d8dce4">100 %</div>
<div class="a" style="left:95px;top:598px;width:20px;height:17px;background:#1b1b1b"></div>
<div class="a" style="left:96px;top:599px;width:18px;height:15px;background:linear-gradient(#6a6a6a,#505050)"></div>
<svg class="a" style="left:96px;top:599px" width="18" height="15"><g fill="#e0a820"><rect x="2" y="3" width="14" height="1"/><rect x="2" y="3" width="1" height="12"/><rect x="14" y="3" width="1" height="12"/><rect x="8" y="1" width="1" height="14"/><rect x="1" y="7" width="3" height="1"/><rect x="13" y="7" width="3" height="1"/><rect x="7" y="6" width="3" height="3"/><rect x="7" y="2" width="3" height="1"/></g></svg>
<div class="a" style="left:117px;top:598px;width:20px;height:17px;background:#141414"></div>
<div class="a" style="left:118px;top:599px;width:18px;height:15px;background:#262626"></div>
<svg class="a" style="left:118px;top:599px" width="18" height="15"><ellipse cx="9" cy="7.5" rx="6" ry="5" fill="none" stroke="#e8e8e8" stroke-width="1.2" stroke-dasharray="1.5 1.3"/></svg>
<div class="a" style="left:139px;top:598px;width:68px;height:17px;background:#141414"></div>
<div class="a" style="left:140px;top:599px;width:66px;height:15px;background:linear-gradient(#484848,#3a3a3a);border-top:1px solid #555"></div>
<div class="t" style="left:147px;top:599px;color:#c5cedb;font-size:11px;line-height:15px">0:00:02:24</div>
<svg class="a" style="left:212px;top:599px" width="14" height="13"><rect x="0" y="1" width="5" height="1.5" fill="#1a1a1a"/><rect x="0" y="2.5" width="13" height="10" fill="#c8c8c8"/><rect x="9.5" y="4" width="2" height="1" fill="#222"/><circle cx="6.5" cy="7.5" r="2.4" fill="none" stroke="#222" stroke-width="1"/></svg>
<svg class="a" style="left:235px;top:599px" width="13" height="14"><circle cx="6.5" cy="4.2" r="3.1" fill="#5e5e5e"/><path d="M0.5 13 Q0.5 7.5 6.5 7.5 Q12.5 7.5 12.5 13 Z" fill="#5e5e5e"/></svg>
<svg class="a" style="left:255px;top:598px" width="16" height="16"><circle cx="8" cy="5" r="3.6" fill="#d03030"/><circle cx="5" cy="10" r="3.6" fill="#30a030" opacity=".9"/><circle cx="11" cy="10" r="3.6" fill="#5050e0" opacity=".9"/></svg>
<div class="a" style="left:275px;top:598px;width:85px;height:17px;background:#141414"></div>
<div class="a" style="left:276px;top:599px;width:83px;height:15px;background:linear-gradient(#484848,#3a3a3a);border-top:1px solid #555;"></div>
<div class="a" style="left:340px;top:601px;width:1px;height:11px;background:#1c1c1c"></div>
<div class="a" style="left:341px;top:601px;width:1px;height:11px;background:#4e4e4e"></div>
<svg class="a" style="left:346px;top:603px" width="9" height="6"><path d="M0 0 H8 L4 5.5 Z" fill="#c0c0c0"/></svg>
<div class="t" style="left:284px;top:598px;color:#f0f0f0;font-size:12px;line-height:15px;">全分辨率</div>
<div class="a" style="left:365px;top:600px;width:14px;height:12px;background:#8c8c8c"></div>
<div class="a" style="left:367px;top:602px;width:10px;height:8px;background:#111"></div>
<div class="a" style="left:369px;top:604px;width:6px;height:4px;background:#bdbdbd"></div>
<svg class="a" style="left:387px;top:600px" width="14" height="12"><rect width="14" height="12" fill="#e0e0e0"/><rect x="0" y="0" width="2" height="2" fill="#555"/><rect x="0" y="4" width="2" height="2" fill="#555"/><rect x="0" y="8" width="2" height="2" fill="#555"/><rect x="2" y="2" width="2" height="2" fill="#555"/><rect x="2" y="6" width="2" height="2" fill="#555"/><rect x="2" y="10" width="2" height="2" fill="#555"/><rect x="4" y="0" width="2" height="2" fill="#555"/><rect x="4" y="4" width="2" height="2" fill="#555"/><rect x="4" y="8" width="2" height="2" fill="#555"/><rect x="6" y="2" width="2" height="2" fill="#555"/><rect x="6" y="6" width="2" height="2" fill="#555"/><rect x="6" y="10" width="2" height="2" fill="#555"/><rect x="8" y="0" width="2" height="2" fill="#555"/><rect x="8" y="4" width="2" height="2" fill="#555"/><rect x="8" y="8" width="2" height="2" fill="#555"/><rect x="10" y="2" width="2" height="2" fill="#555"/><rect x="10" y="6" width="2" height="2" fill="#555"/><rect x="10" y="10" width="2" height="2" fill="#555"/><rect x="12" y="0" width="2" height="2" fill="#555"/><rect x="12" y="4" width="2" height="2" fill="#555"/><rect x="12" y="8" width="2" height="2" fill="#555"/></svg>
<div class="a" style="left:406px;top:598px;width:104px;height:17px;background:#141414"></div>
<div class="a" style="left:407px;top:599px;width:102px;height:15px;background:linear-gradient(#484848,#3a3a3a);border-top:1px solid #555;"></div>
<div class="a" style="left:491px;top:601px;width:1px;height:11px;background:#1c1c1c"></div>
<div class="a" style="left:492px;top:601px;width:1px;height:11px;background:#4e4e4e"></div>
<svg class="a" style="left:497px;top:603px" width="9" height="6"><path d="M0 0 H8 L4 5.5 Z" fill="#c0c0c0"/></svg>
<div class="t" style="left:414px;top:598px;color:#f0f0f0;font-size:12px;line-height:15px;">有效摄像机</div>
<div class="a" style="left:514px;top:598px;width:68px;height:17px;background:#141414"></div>
<div class="a" style="left:515px;top:599px;width:66px;height:15px;background:linear-gradient(#484848,#3a3a3a);border-top:1px solid #555;"></div>
<div class="a" style="left:562px;top:601px;width:1px;height:11px;background:#1c1c1c"></div>
<div class="a" style="left:563px;top:601px;width:1px;height:11px;background:#4e4e4e"></div>
<svg class="a" style="left:568px;top:603px" width="9" height="6"><path d="M0 0 H8 L4 5.5 Z" fill="#c0c0c0"/></svg>
<div class="t" style="left:520px;top:598px;color:#f0f0f0;font-size:12px;line-height:15px;"><span style="color:#c5cedb">1</span> 视图</div>
<svg class="a" style="left:588px;top:599px" width="13" height="14"><path d="M1 2.5 H11" stroke="#d0d0d0" stroke-width="1"/><path d="M0.5 2.5 L2.5 0.5 V4.5 Z M11.5 2.5 L9.5 0.5 V4.5 Z" fill="#d0d0d0"/><rect x="0.5" y="5.5" width="11" height="7" fill="#8a8a8a" stroke="#c8c8c8" stroke-width="1"/></svg>
<div class="a" style="left:606px;top:598px;width:20px;height:17px;background:#141414"></div>
<div class="a" style="left:607px;top:599px;width:18px;height:15px;background:#262626"></div>
<svg class="a" style="left:607px;top:599px" width="18" height="15"><rect x="2.5" y="2.5" width="12" height="9" fill="#666" stroke="#d0d0d0" stroke-width="1"/><path d="M2 11.5 H15" stroke="#d0d0d0"/><path d="M10 3.5 L6.5 8 H9 L7.5 11 L11.5 6.5 H9 Z" fill="#f0f0f0"/><path d="M13 12 h4 l-2 2.2 z" fill="#e8e8e8"/></svg>
<svg class="a" style="left:631px;top:600px" width="14" height="12"><rect x="0.5" y="1.5" width="13" height="10" fill="#5a5a5a" stroke="#c8c8c8" stroke-width="1"/><path d="M4 1 H10 L8 4 H6 Z" fill="#d0d0d0"/><rect x="3" y="4" width="2" height="7" fill="#c8c8c8"/><rect x="9" y="4" width="2" height="7" fill="#c8c8c8"/><rect x="6" y="4" width="2" height="3" fill="#c8c8c8"/></svg>
<svg class="a" style="left:652px;top:599px" width="15" height="14"><rect x="5" y="0" width="5" height="4" fill="#d0d0d0"/><rect x="7" y="4" width="1" height="3" fill="#d0d0d0"/><rect x="2" y="6" width="11" height="1" fill="#d0d0d0"/><rect x="2" y="6" width="1" height="3" fill="#d0d0d0"/><rect x="12" y="6" width="1" height="3" fill="#d0d0d0"/><rect x="0" y="9" width="5" height="4" fill="#d0d0d0"/><rect x="10" y="9" width="5" height="4" fill="#d0d0d0"/></svg>
<div class="a" style="left:671px;top:598px;width:1px;height:17px;background:#222"></div>
<div class="a" style="left:672px;top:598px;width:1px;height:17px;background:#4a4a4a"></div>
<svg class="a" style="left:676px;top:599px" width="15" height="15"><rect x="0.5" y="0.5" width="14" height="13" fill="#262626"/><g stroke="#e8e8e8" stroke-width="1.2" fill="none" stroke-linecap="round"><path d="M1 4 L13.5 10.5"/><path d="M7 5.5 Q7.5 4.5 9 4.5 H14"/><path d="M1 10.5 H6.5 Q7.5 10.5 8 9.5"/><path d="M7.5 1.5 L4.8 6.5"/><path d="M9.8 9.5 L7.3 13.5"/></g><circle cx="7.5" cy="7.8" r="2.4" fill="#f0f0f0"/></svg>
<div class="t" style="left:697px;top:599px;color:#e0a020;font-size:11px;line-height:15px;letter-spacing:0.7px">+0.0</div>
<div class="a" style="left:697px;top:613px;width:23px;height:1px;background:repeating-linear-gradient(90deg,#c89018 0 1px,transparent 1px 2px)"></div>
<div class="a" style="left:0px;top:623px;width:1232px;height:18px;background:linear-gradient(#393939,#323232)"></div>
<div class="a" style="left:0px;top:641px;width:1232px;height:1px;background:#151515"></div>
<div class="a" style="left:0px;top:642px;width:1232px;height:1px;background:#474747"></div>
<div class="a" style="left:0px;top:643px;width:1232px;height:167px;background:#3f3f3f"></div>
<div class="a" style="left:0px;top:643px;width:202px;height:35px;background:#3e3e3e"></div>
<div class="a" style="left:0px;top:678px;width:202px;height:1px;background:#141414"></div>
<div class="a" style="left:0px;top:679px;width:202px;height:18px;background:linear-gradient(#3e3e3e,#393939)"></div>
<div class="a" style="left:0px;top:697px;width:202px;height:1px;background:#141414"></div>
<div class="a" style="left:0px;top:698px;width:176px;height:112px;background:#404040"></div>
<div class="a" style="left:176px;top:698px;width:1px;height:112px;background:#1e1e1e"></div>
<div class="a" style="left:177px;top:698px;width:15px;height:112px;background:#363636"></div>
<div class="a" style="left:192px;top:698px;width:1px;height:112px;background:#1e1e1e"></div>
<div class="a" style="left:193px;top:698px;width:8px;height:112px;background:#3f3f3f"></div>
<div class="a" style="left:201px;top:643px;width:1px;height:167px;background:#1e1e1e"></div>
<svg class="a" style="left:0;top:655px" width="6" height="14"><path d="M-6 3 L1 0 L6 3 V10 L-1 13 Z" fill="#9a9a9a"/><path d="M-6 3 L1 0 L6 3 L-1 6 Z" fill="#cfcfcf"/><path d="M-1 6 L6 3 V10 L-1 13 Z" fill="#6a6a6a"/></svg>
<svg class="a" style="left:22px;top:653px" width="19" height="16"><rect x="0" y="7" width="18" height="9" fill="#1a1a1a"/><rect x="0" y="8" width="18" height="3" fill="#9a9a9a"/><rect x="0" y="11" width="18" height="4" fill="#7a7a7a"/><path d="M4 8 A5 5 0 0 1 14 8 Z" fill="#1a1a1a"/><path d="M4.5 7.5 A4.5 4.5 0 0 1 13.5 7.5 Q11 8 10 9 L9.5 12 L8.5 12 L8 9 Q7 8 4.5 7.5 Z" fill="#e8e8e8"/><circle cx="7.5" cy="5" r="0.8" fill="#333"/><circle cx="10.5" cy="5" r="0.8" fill="#333"/></svg>
<svg class="a" style="left:47px;top:652px" width="21" height="18"><rect x="0.5" y="4.5" width="8" height="13" fill="#111"/><rect x="1" y="5" width="7" height="12" fill="#e0e0e0"/><rect x="4" y="6" width="1" height="10" fill="#888"/><rect x="4" y="8" width="1" height="1" fill="#e0e0e0"/><rect x="4" y="11" width="1" height="1" fill="#e0e0e0"/><rect x="4" y="14" width="1" height="1" fill="#e0e0e0"/><rect x="4" y="17" width="1" height="1" fill="#e0e0e0"/><rect x="2" y="6" width="1" height="1" fill="#111"/><rect x="6" y="6" width="1" height="1" fill="#111"/><rect x="2" y="8" width="1" height="1" fill="#111"/><rect x="6" y="8" width="1" height="1" fill="#111"/><rect x="2" y="10" width="1" height="1" fill="#111"/><rect x="6" y="10" width="1" height="1" fill="#111"/><rect x="2" y="12" width="1" height="1" fill="#111"/><rect x="6" y="12" width="1" height="1" fill="#111"/><rect x="2" y="14" width="1" height="1" fill="#111"/><rect x="6" y="14" width="1" height="1" fill="#111"/><rect x="4.5" y="2.5" width="8" height="13" fill="#111"/><rect x="5" y="3" width="7" height="12" fill="#e0e0e0"/><rect x="8" y="4" width="1" height="10" fill="#888"/><rect x="8" y="6" width="1" height="1" fill="#e0e0e0"/><rect x="8" y="9" width="1" height="1" fill="#e0e0e0"/><rect x="8" y="12" width="1" height="1" fill="#e0e0e0"/><rect x="8" y="15" width="1" height="1" fill="#e0e0e0"/><rect x="6" y="4" width="1" height="1" fill="#111"/><rect x="10" y="4" width="1" height="1" fill="#111"/><rect x="6" y="6" width="1" height="1" fill="#111"/><rect x="10" y="6" width="1" height="1" fill="#111"/><rect x="6" y="8" width="1" height="1" fill="#111"/><rect x="10" y="8" width="1" height="1" fill="#111"/><rect x="6" y="10" width="1" height="1" fill="#111"/><rect x="10" y="10" width="1" height="1" fill="#111"/><rect x="6" y="12" width="1" height="1" fill="#111"/><rect x="10" y="12" width="1" height="1" fill="#111"/><rect x="8.5" y="0.5" width="11" height="12" fill="#111"/><rect x="9" y="1" width="10" height="11" fill="#e0e0e0"/><rect x="12" y="2" width="4" height="9" fill="#888"/><rect x="12" y="4" width="4" height="1" fill="#e0e0e0"/><rect x="12" y="7" width="4" height="1" fill="#e0e0e0"/><rect x="12" y="10" width="4" height="1" fill="#e0e0e0"/><rect x="10" y="2" width="1" height="1" fill="#111"/><rect x="17" y="2" width="1" height="1" fill="#111"/><rect x="10" y="4" width="1" height="1" fill="#111"/><rect x="17" y="4" width="1" height="1" fill="#111"/><rect x="10" y="6" width="1" height="1" fill="#111"/><rect x="17" y="6" width="1" height="1" fill="#111"/><rect x="10" y="8" width="1" height="1" fill="#111"/><rect x="17" y="8" width="1" height="1" fill="#111"/><rect x="10" y="10" width="1" height="1" fill="#111"/><rect x="17" y="10" width="1" height="1" fill="#111"/></svg>
<svg class="a" style="left:73px;top:651px" width="19" height="19"><defs><linearGradient id="cg" x1="0" y1="0" x2="1" y2="1"><stop offset="0" stop-color="#d0d0d0"/><stop offset="1" stop-color="#6a6a6a"/></linearGradient></defs><path d="M3 9 L11 1 A4.2 4.2 0 0 1 18 8 L10 16 A4.2 4.2 0 0 1 3 9 Z" fill="url(#cg)" stroke="#1a1a1a" stroke-width="0.8"/><path d="M4 12 A4 4 0 0 0 8 16" fill="none" stroke="#5a5a5a" stroke-width="1"/><path d="M6 10 A4 4 0 0 0 10 14" fill="none" stroke="#5a5a5a" stroke-width="1"/></svg>
<svg class="a" style="left:0;top:683px" width="4" height="10"><rect x="0" y="2" width="3" height="6" fill="#aaa"/></svg>
<svg class="a" style="left:5px;top:680px" width="14" height="15"><rect x="0.5" y="0.5" width="12" height="13" fill="#111"/><rect x="1" y="1" width="11" height="12" fill="#e0e0e0"/><rect x="4" y="2" width="5" height="10" fill="#6a6a6a"/><rect x="4" y="4" width="5" height="1" fill="#e0e0e0"/><rect x="4" y="7" width="5" height="1" fill="#e0e0e0"/><rect x="4" y="10" width="5" height="1" fill="#e0e0e0"/><rect x="4" y="13" width="5" height="1" fill="#e0e0e0"/><rect x="2" y="2" width="1" height="1" fill="#111"/><rect x="10" y="2" width="1" height="1" fill="#111"/><rect x="2" y="4" width="1" height="1" fill="#111"/><rect x="10" y="4" width="1" height="1" fill="#111"/><rect x="2" y="6" width="1" height="1" fill="#111"/><rect x="10" y="6" width="1" height="1" fill="#111"/><rect x="2" y="8" width="1" height="1" fill="#111"/><rect x="10" y="8" width="1" height="1" fill="#111"/><rect x="2" y="10" width="1" height="1" fill="#111"/><rect x="10" y="10" width="1" height="1" fill="#111"/></svg>
<svg class="a" style="left:21px;top:681px" width="13" height="13"><path d="M1 7 L6 2 A3.2 3.2 0 0 1 11.5 6.5 L6.5 11.5 A3.2 3.2 0 0 1 1 7 Z" fill="#8a8a8a" stroke="#aaa" stroke-width="0.6"/><circle cx="8.5" cy="4.5" r="3" fill="#a8a8a8"/></svg>
<svg class="a" style="left:36px;top:681px" width="13" height="13"><circle cx="6.5" cy="6.5" r="5.8" fill="#c8c8c8" stroke="#e0e0e0" stroke-width="0.8"/><path d="M10.6 2.4 A5.8 5.8 0 0 0 2.4 10.6 Z" fill="#222"/></svg>
<svg class="a" style="left:51px;top:681px" width="11" height="13"><path d="M5.5 0.5 L10.5 3 V10 L5.5 12.5 L0.5 10 V3 Z" fill="#8a8a8a" stroke="#d8d8d8" stroke-width="0.8"/><path d="M0.5 3 L5.5 5.5 L10.5 3" fill="none" stroke="#d8d8d8" stroke-width="0.8"/><path d="M5.5 5.5 V12.5" stroke="#d8d8d8" stroke-width="0.8"/></svg>
<div class="t" style="left:66px;top:682px;color:#c0c4cc;font-size:10px;line-height:12px">父级</div>
<div class="a" style="left:202px;top:643px;width:1030px;height:5px;background:#424242;border-top:1px solid #4a4a4a"></div>
<div class="a" style="left:202px;top:648px;width:1030px;height:1px;background:#1a1a1a"></div>
<div class="a" style="left:202px;top:649px;width:1030px;height:8px;background:#7a7a7a"></div>
<div class="a" style="left:202px;top:657px;width:1030px;height:1px;background:#1a1a1a"></div>
<div class="a" style="left:202px;top:658px;width:1030px;height:19px;background:#3f3f3f"></div>
<div class="a" style="left:202px;top:677px;width:1030px;height:1px;background:#141414"></div>
<div class="a" style="left:202px;top:678px;width:1030px;height:15px;background:#747474;border-top:1px solid #858585"></div>
<div class="a" style="left:202px;top:693px;width:1030px;height:1px;background:#141414"></div>
<div class="a" style="left:202px;top:694px;width:1030px;height:3px;background:#12c41e"></div>
<div class="a" style="left:202px;top:697px;width:1030px;height:1px;background:#141414"></div>
<div class="a" style="left:202px;top:698px;width:1030px;height:15px;background:#4c4c4c"></div>
<div class="a" style="left:202px;top:713px;width:1030px;height:1px;background:#333"></div>
<div class="a" style="left:202px;top:714px;width:1030px;height:94px;background:#4f4f4f"></div>
<div class="a" style="left:202px;top:808px;width:1030px;height:2px;background:#333"></div>
<div class="a" style="left:292px;top:698px;width:1px;height:112px;background:#333"></div>
<div class="a" style="left:292px;top:672px;width:1px;height:5px;background:#a8a8a8"></div>
<div class="t" style="left:252px;top:659px;width:81px;text-align:center;color:#d0d8e0;font-size:11px;line-height:12px;letter-spacing:-0.6px">05f</div>
<div class="a" style="left:384px;top:698px;width:1px;height:112px;background:#333"></div>
<div class="a" style="left:384px;top:672px;width:1px;height:5px;background:#a8a8a8"></div>
<div class="t" style="left:344px;top:659px;width:81px;text-align:center;color:#d0d8e0;font-size:11px;line-height:12px;letter-spacing:-0.6px">10f</div>
<div class="a" style="left:475px;top:698px;width:1px;height:112px;background:#333"></div>
<div class="a" style="left:475px;top:672px;width:1px;height:5px;background:#a8a8a8"></div>
<div class="t" style="left:435px;top:659px;width:81px;text-align:center;color:#d0d8e0;font-size:11px;line-height:12px;letter-spacing:-0.6px">15f</div>
<div class="a" style="left:566px;top:698px;width:1px;height:112px;background:#333"></div>
<div class="a" style="left:566px;top:672px;width:1px;height:5px;background:#a8a8a8"></div>
<div class="t" style="left:526px;top:659px;width:81px;text-align:center;color:#d0d8e0;font-size:11px;line-height:12px;letter-spacing:-0.6px">20f</div>
<div class="a" style="left:657px;top:698px;width:1px;height:112px;background:#333"></div>
<div class="a" style="left:657px;top:672px;width:1px;height:5px;background:#a8a8a8"></div>
<div class="t" style="left:617px;top:659px;width:81px;text-align:center;color:#d0d8e0;font-size:11px;line-height:12px;letter-spacing:-0.6px">01:00f</div>
<div class="a" style="left:749px;top:698px;width:1px;height:112px;background:#333"></div>
<div class="a" style="left:749px;top:672px;width:1px;height:5px;background:#a8a8a8"></div>
<div class="t" style="left:709px;top:659px;width:81px;text-align:center;color:#d0d8e0;font-size:11px;line-height:12px;letter-spacing:-0.6px">05f</div>
<div class="a" style="left:840px;top:698px;width:1px;height:112px;background:#333"></div>
<div class="a" style="left:840px;top:672px;width:1px;height:5px;background:#a8a8a8"></div>
<div class="t" style="left:800px;top:659px;width:81px;text-align:center;color:#d0d8e0;font-size:11px;line-height:12px;letter-spacing:-0.6px">10f</div>
<div class="a" style="left:931px;top:698px;width:1px;height:112px;background:#333"></div>
<div class="a" style="left:931px;top:672px;width:1px;height:5px;background:#a8a8a8"></div>
<div class="t" style="left:891px;top:659px;width:81px;text-align:center;color:#d0d8e0;font-size:11px;line-height:12px;letter-spacing:-0.6px">15f</div>
<div class="a" style="left:1022px;top:698px;width:1px;height:112px;background:#333"></div>
<div class="a" style="left:1022px;top:672px;width:1px;height:5px;background:#a8a8a8"></div>
<div class="t" style="left:982px;top:659px;width:81px;text-align:center;color:#d0d8e0;font-size:11px;line-height:12px;letter-spacing:-0.6px">20f</div>
<div class="a" style="left:1114px;top:698px;width:1px;height:112px;background:#333"></div>
<div class="a" style="left:1114px;top:672px;width:1px;height:5px;background:#a8a8a8"></div>
<div class="t" style="left:1074px;top:659px;width:81px;text-align:center;color:#d0d8e0;font-size:11px;line-height:12px;letter-spacing:-0.6px">02:00f</div>
<div class="a" style="left:1205px;top:698px;width:1px;height:112px;background:#333"></div>
<div class="a" style="left:1205px;top:672px;width:1px;height:5px;background:#a8a8a8"></div>
<div class="t" style="left:1165px;top:659px;width:81px;text-align:center;color:#d0d8e0;font-size:11px;line-height:12px;letter-spacing:-0.6px">05f</div>
<div class="t" style="left:203px;top:795px;color:#d0d8e0;font-size:11px;line-height:12px">50</div>
<div class="a" style="left:95px;top:617px;width:185px;height:151px;background:#f0f0f0;border-right:1px solid #fafafa;border-bottom:1px solid #fafafa;box-shadow:2px 2px 3px rgba(0,0,0,.55)"></div>
<div class="a" style="left:95px;top:616px;width:185px;height:1px;background:#7a7a7a"></div>
<div class="a" style="left:124px;top:619px;width:1px;height:146px;background:#d8d8d8"></div>
<div class="a" style="left:97px;top:619px;width:180px;height:22px;background:rgba(150,195,240,0.33);border:1px solid #70aae6"></div>
<div class="a" style="left:125px;top:665px;width:151px;height:1px;background:#d4d4d4"></div>
<div class="a" style="left:125px;top:739px;width:151px;height:1px;background:#d4d4d4"></div>
<div class="a" style="left:97px;top:714px;width:22px;height:22px;background:#c3def0;border:1px solid #3a9ad8"></div>
<svg class="a" style="left:102px;top:719px" width="12" height="12"><path d="M2 6 L5 9 L10 3" fill="none" stroke="#222" stroke-width="2.2"/></svg>
<div class="t" style="left:129px;top:623px;color:#000;font-size:12px;line-height:14px;-webkit-text-stroke:0.15px #000">字幕 / 活动安全框</div>
<div class="t" style="left:129px;top:645px;color:#000;font-size:12px;line-height:14px;-webkit-text-stroke:0.15px #000">比例栅格</div>
<div class="t" style="left:129px;top:674px;color:#000;font-size:12px;line-height:14px;-webkit-text-stroke:0.15px #000">栅格</div>
<div class="t" style="left:129px;top:696px;color:#000;font-size:12px;line-height:14px;-webkit-text-stroke:0.15px #000">参考线</div>
<div class="t" style="left:129px;top:718px;color:#000;font-size:12px;line-height:14px;-webkit-text-stroke:0.15px #000">标尺</div>
<div class="t" style="left:129px;top:746px;color:#6e6e6e;font-size:12px;line-height:14px">3D 参考坐标</div>
<div class="a" style="left:92px;top:610px;width:193px;height:37px;border:3px solid #f50ff5"></div>
</body></html>
